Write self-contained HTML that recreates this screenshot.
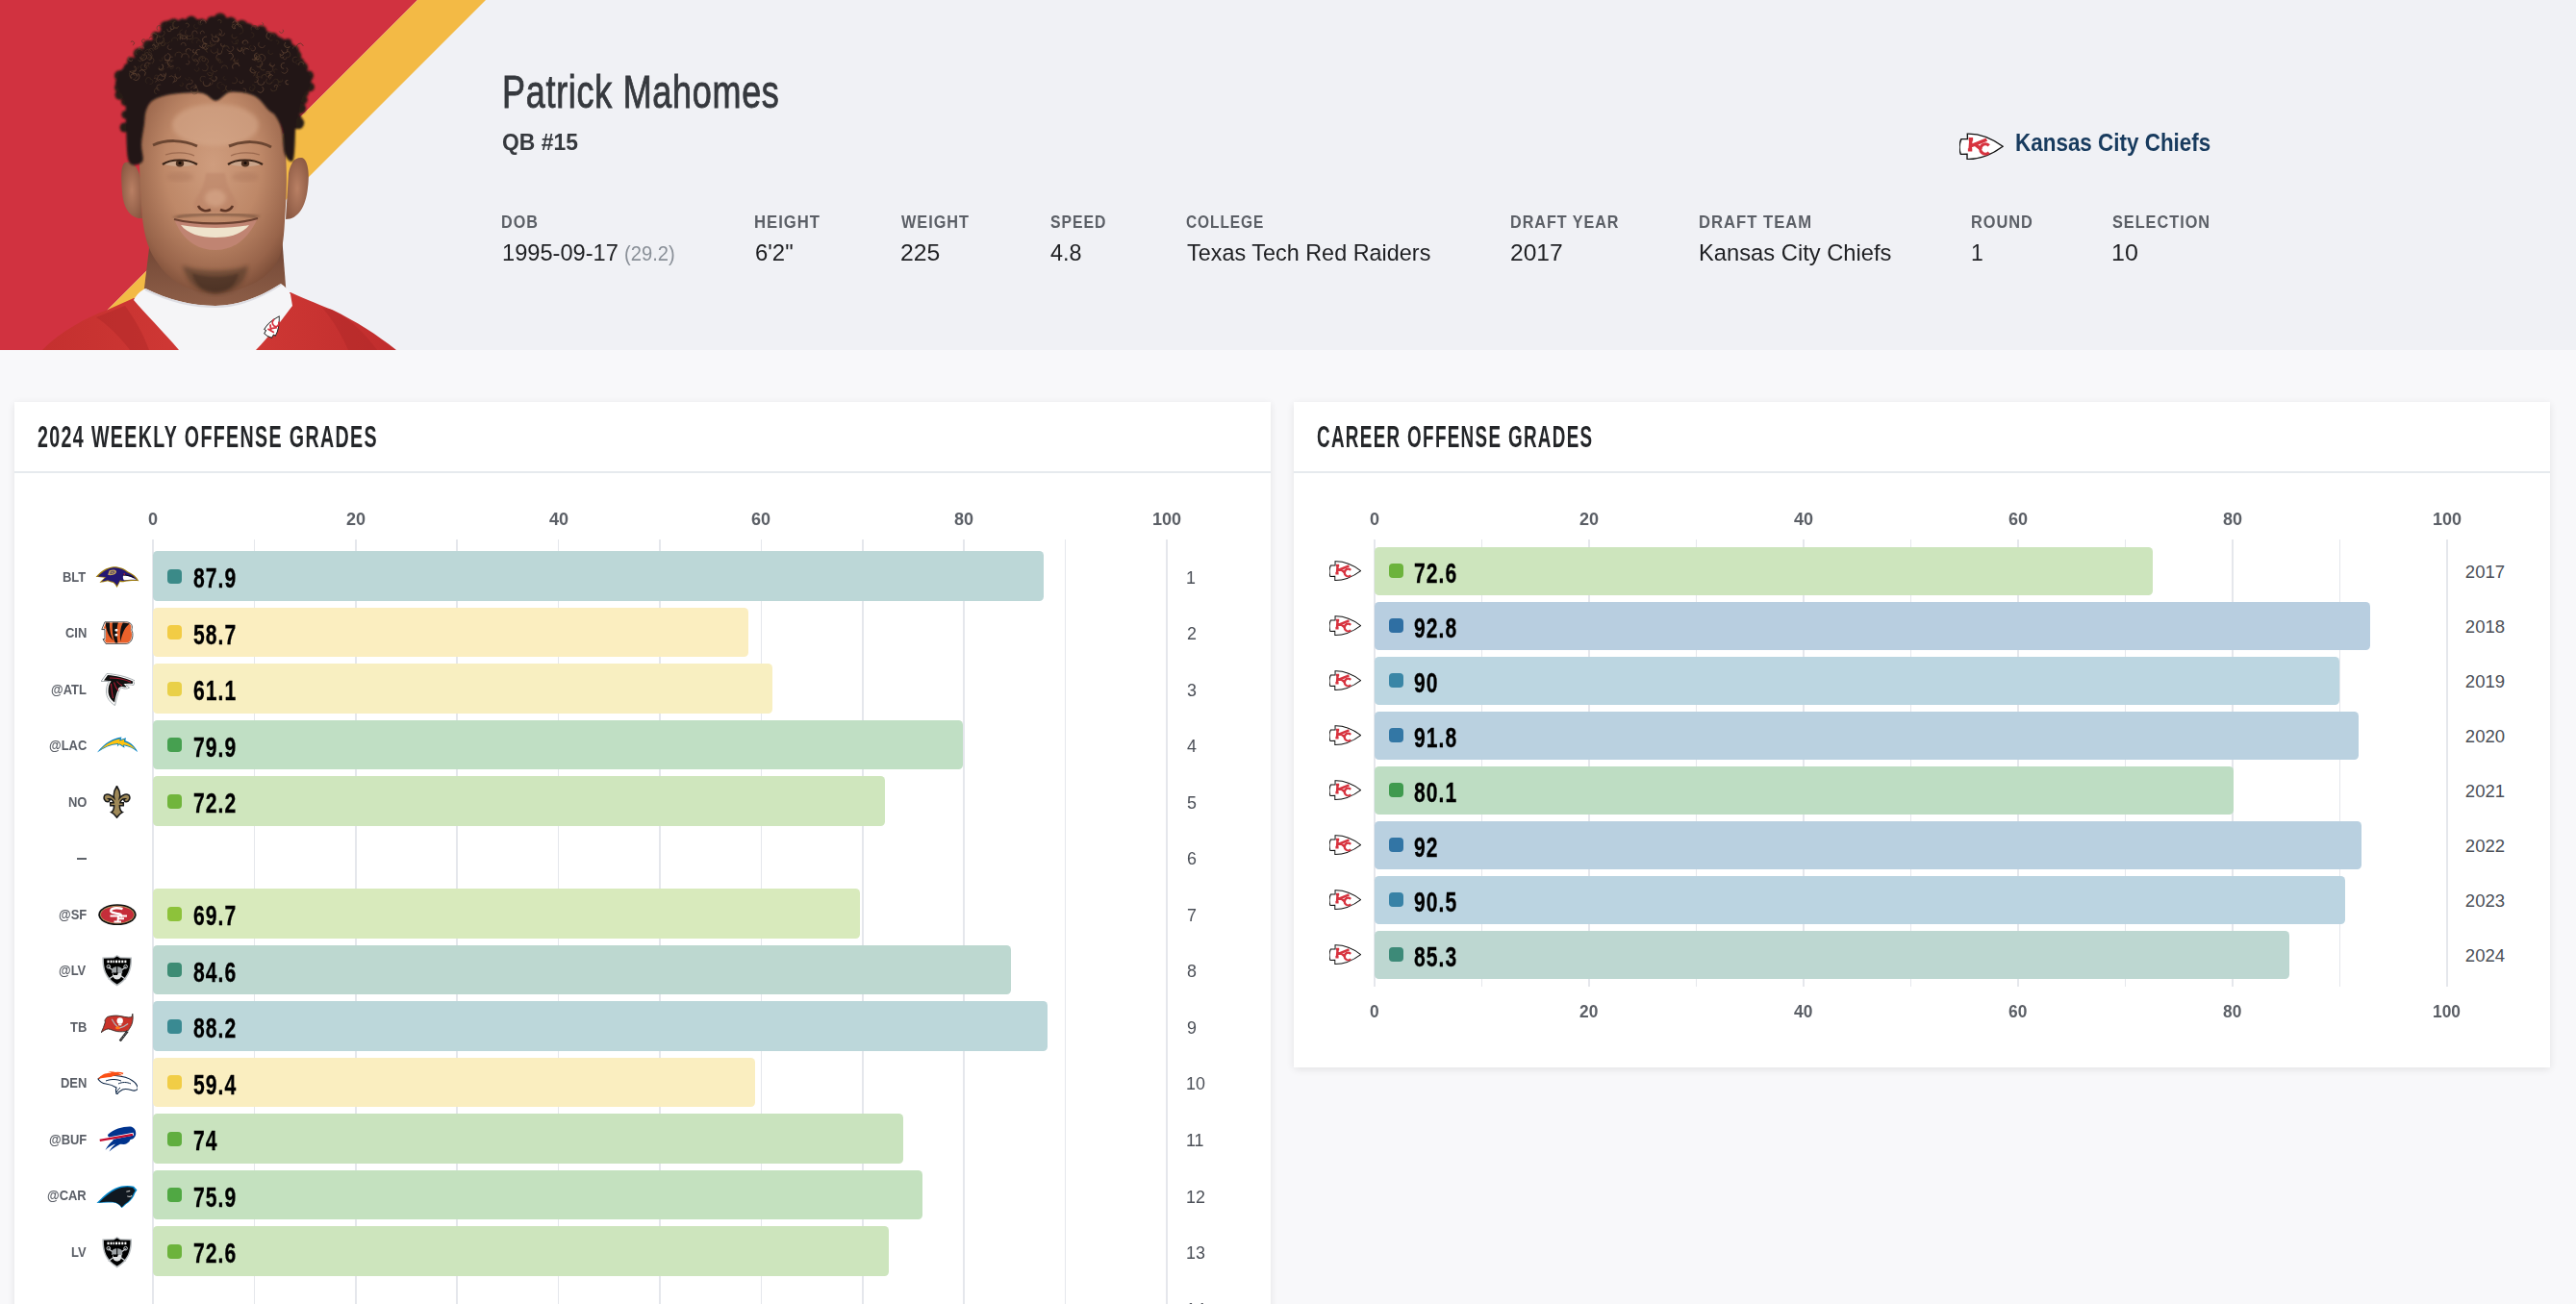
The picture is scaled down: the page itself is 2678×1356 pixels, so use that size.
<!DOCTYPE html>
<html><head><meta charset="utf-8"><style>
html,body{margin:0;padding:0;}
body{width:2678px;height:1356px;overflow:hidden;position:relative;background:#f8f8fa;font-family:"Liberation Sans", sans-serif;}
.t{position:absolute;white-space:nowrap;line-height:1;}
svg{position:absolute;}
</style></head><body>
<div style="position:absolute;left:0.00px;top:0.00px;width:2678.00px;height:364.00px;background:#f0f1f5;"></div><svg style="left:0;top:0" width="520" height="364" viewBox="0 0 520 364">
<defs>
<radialGradient id="skin" cx="0.5" cy="0.38" r="0.65">
<stop offset="0" stop-color="#cf9d7e"/><stop offset="0.5" stop-color="#be8868"/><stop offset="0.85" stop-color="#98644a"/><stop offset="1" stop-color="#7a4c37"/>
</radialGradient>
<radialGradient id="ear" cx="0.5" cy="0.5" r="0.6"><stop offset="0" stop-color="#b98064"/><stop offset="1" stop-color="#8a5842"/></radialGradient>
<linearGradient id="neck" x1="0" y1="0" x2="0" y2="1"><stop offset="0" stop-color="#6e4332"/><stop offset="1" stop-color="#8f6049"/></linearGradient>
<linearGradient id="jer" x1="0" y1="0" x2="1" y2="0"><stop offset="0" stop-color="#c4302f"/><stop offset="0.5" stop-color="#d23a36"/><stop offset="1" stop-color="#c02d2d"/></linearGradient>
<filter id="soft" x="-10%" y="-10%" width="120%" height="120%"><feGaussianBlur stdDeviation="0.8"/></filter>
<filter id="blur2"><feGaussianBlur stdDeviation="2"/></filter>
</defs>
<polygon points="0,0 434,0 70,364 0,364" fill="#d13240"/>
<polygon points="434,0 505,0 141,364 70,364" fill="#f3ba45"/>
<!-- jersey -->
<path d="M44,364 C62,345 90,330 112,322 L139,310 L302,304 C320,312 335,318 345,322 C370,334 392,348 412,364 Z" fill="url(#jer)"/>
<path d="M100,330 C110,336 125,350 135,364 L155,364 C148,345 140,332 130,318 Z" fill="#b02828" opacity="0.5"/>
<path d="M335,320 C348,335 356,350 362,364 L392,364 C378,345 362,330 345,322 Z" fill="#b02828" opacity="0.5"/>
<!-- neck -->
<path d="M156,250 L293,245 L298,310 C270,322 185,326 148,316 Z" fill="url(#neck)"/>
<!-- collar -->
<path d="M139,312 C142,306 147,302 151,300 C175,312 200,318 224,318 C250,318 275,306 292,295 C297,298 300,302 302,306 L304,318 C295,330 280,350 266,364 L186,364 C170,345 150,325 139,312 Z" fill="#f5f5f7"/>
<path d="M151,301 C175,313 200,319 224,319 C250,319 275,307 292,296" stroke="#dcdce2" stroke-width="2" fill="none"/>
<!-- collar KC patch -->
<g transform="translate(285,338) rotate(-60) scale(0.75)">
<path d="M-12,-9 C-4,-9 6,-5 14,0 C6,5 -4,9 -12,9 L-12,6 L-17,6 C-18,3 -18,-3 -17,-6 L-12,-6 Z" fill="#fff" stroke="#222" stroke-width="1.2"/>
<path d="M-9,-5 L-9,5 M-9,0 L-2,-5 M-6,-1 L-1,5" stroke="#d7333f" stroke-width="2.4" fill="none"/>
<path d="M7,-4 C0,-6 -3,1 0,4 C2,6 6,5 7,3" stroke="#d7333f" stroke-width="2.2" fill="none"/>
</g>
<!-- ears -->
<path d="M148,227 C135,228 128,215 127,200 C126,185 125,172 130,169 C138,166 144,175 146,185 Z" fill="url(#ear)"/>
<path d="M297,228 C310,228 318,215 320,195 C322,180 320,166 314,164 C306,163 302,170 300,180 Z" fill="url(#ear)"/>
<!-- face -->
<path d="M145,140 C146,110 160,92 185,90 C205,88 245,88 264,92 C285,100 294,125 297,160 C299,190 297,215 296,230 C295,250 293,262 290,268 C282,288 258,302 224,306 C198,304 178,294 165,275 C155,262 151,250 148,227 C146,200 144,165 145,140 Z" fill="url(#skin)"/>
<!-- cheek highlights -->
<ellipse cx="224" cy="130" rx="45" ry="22" fill="#d9ad90" opacity="0.5" filter="url(#blur2)"/>
<g filter="url(#soft)"><circle cx="129.6" cy="132.6" r="5.0" fill="#261a14"/><circle cx="130.6" cy="119.2" r="4.2" fill="#261a14"/><circle cx="130.0" cy="105.8" r="4.2" fill="#261a14"/><circle cx="124.8" cy="98.5" r="5.3" fill="#261a14"/><circle cx="124.3" cy="91.1" r="5.3" fill="#261a14"/><circle cx="124.5" cy="86.1" r="4.7" fill="#261a14"/><circle cx="124.6" cy="78.7" r="5.7" fill="#261a14"/><circle cx="132.9" cy="70.2" r="4.1" fill="#261a14"/><circle cx="136.4" cy="63.7" r="4.4" fill="#261a14"/><circle cx="145.1" cy="56.1" r="6.4" fill="#261a14"/><circle cx="154.4" cy="47.5" r="5.9" fill="#261a14"/><circle cx="162.1" cy="37.0" r="4.2" fill="#261a14"/><circle cx="172.5" cy="27.8" r="6.0" fill="#261a14"/><circle cx="176.1" cy="26.8" r="5.8" fill="#261a14"/><circle cx="180.6" cy="25.6" r="6.4" fill="#261a14"/><circle cx="189.9" cy="25.0" r="5.7" fill="#261a14"/><circle cx="198.9" cy="22.8" r="6.2" fill="#261a14"/><circle cx="204.4" cy="24.2" r="4.4" fill="#261a14"/><circle cx="209.7" cy="24.0" r="4.5" fill="#261a14"/><circle cx="220.7" cy="22.7" r="6.0" fill="#261a14"/><circle cx="228.9" cy="20.1" r="6.6" fill="#261a14"/><circle cx="239.9" cy="23.3" r="5.8" fill="#261a14"/><circle cx="251.4" cy="27.3" r="6.5" fill="#261a14"/><circle cx="257.8" cy="30.0" r="6.0" fill="#261a14"/><circle cx="271.5" cy="32.4" r="5.9" fill="#261a14"/><circle cx="284.0" cy="38.9" r="4.9" fill="#261a14"/><circle cx="299.2" cy="44.4" r="4.1" fill="#261a14"/><circle cx="301.6" cy="49.7" r="4.4" fill="#261a14"/><circle cx="306.4" cy="52.1" r="4.4" fill="#261a14"/><circle cx="306.7" cy="58.2" r="6.6" fill="#261a14"/><circle cx="310.9" cy="65.3" r="5.6" fill="#261a14"/><circle cx="313.5" cy="70.5" r="6.6" fill="#261a14"/><circle cx="320.9" cy="78.7" r="5.1" fill="#261a14"/><circle cx="319.6" cy="82.9" r="4.5" fill="#261a14"/><circle cx="322.3" cy="90.5" r="4.7" fill="#261a14"/><circle cx="316.4" cy="96.0" r="4.8" fill="#261a14"/><circle cx="314.7" cy="103.6" r="5.1" fill="#261a14"/><circle cx="312.0" cy="112.5" r="6.1" fill="#261a14"/><circle cx="307.6" cy="123.3" r="6.0" fill="#261a14"/><circle cx="309.9" cy="128.0" r="6.3" fill="#261a14"/><path d="M134.0,168.0 C131.2,161.6 131.7,140.2 131.0,129.6 C130.3,119.0 131.3,111.3 130.0,104.7 C128.7,98.1 123.8,94.7 123.0,89.7 C122.2,84.7 122.5,79.5 125.0,74.8 C127.5,70.1 132.9,66.8 137.9,61.8 C142.9,56.8 149.1,50.9 154.9,44.9 C160.7,38.9 168.7,29.4 172.8,25.9 C177.0,22.4 175.3,25.1 179.8,23.9 C184.3,22.7 194.7,19.1 199.7,18.9 C204.7,18.7 204.7,23.2 209.7,22.9 C214.7,22.6 222.9,16.7 229.6,17.0 C236.2,17.3 242.9,22.9 249.6,24.9 C256.2,26.9 261.2,25.9 269.5,28.9 C277.8,31.9 293.1,39.4 299.4,42.9 C305.7,46.4 305.7,46.8 307.4,49.9 C309.1,53.0 307.4,57.6 309.4,61.8 C311.4,66.0 317.2,70.5 319.4,74.8 C321.6,79.1 323.2,83.5 322.4,87.7 C321.6,91.9 316.6,94.4 314.4,99.7 C312.2,105.0 310.6,114.6 309.4,119.6 C308.2,124.6 308.1,121.9 307.4,129.6 C306.7,137.3 306.9,160.9 305.0,166.0 C303.1,171.1 298.0,165.2 296.0,160.0 C294.0,154.8 294.7,141.7 293.0,135.0 C291.3,128.3 288.2,123.4 286.0,120.0 C283.8,116.6 283.1,118.1 279.5,114.7 C275.9,111.3 271.1,102.9 264.5,99.7 C257.9,96.5 246.2,94.9 239.6,95.7 C233.0,96.5 229.7,104.5 224.7,104.7 C219.7,104.9 217.2,97.9 209.7,96.7 C202.2,95.5 188.1,96.5 179.8,97.7 C171.5,98.9 164.6,100.9 159.9,103.7 C155.2,106.5 153.6,110.4 151.9,114.7 C150.2,119.0 150.7,123.7 149.9,129.6 C149.1,135.5 147.3,143.6 147.0,150.0 C146.7,156.4 150.2,165.0 148.0,168.0 C145.8,171.0 136.8,174.4 134.0,168.0 Z" fill="#241913"/></g><g opacity="0.9"><circle cx="202.6" cy="53.1" r="2.0" fill="none" stroke="#6a4c38" stroke-width="0.9" stroke-dasharray="6.9 5.7" transform="rotate(22 202.6 53.1)" opacity="0.75"/><circle cx="160.0" cy="48.5" r="1.9" fill="none" stroke="#5a4030" stroke-width="0.9" stroke-dasharray="6.6 5.4" transform="rotate(204 160.0 48.5)" opacity="0.75"/><circle cx="243.5" cy="27.5" r="2.2" fill="none" stroke="#6a4c38" stroke-width="0.9" stroke-dasharray="7.7 6.3" transform="rotate(53 243.5 27.5)" opacity="0.75"/><circle cx="176.7" cy="49.1" r="2.5" fill="none" stroke="#5a4030" stroke-width="0.9" stroke-dasharray="8.7 7.1" transform="rotate(42 176.7 49.1)" opacity="0.75"/><circle cx="218.9" cy="46.3" r="2.1" fill="none" stroke="#3a2a1f" stroke-width="0.9" stroke-dasharray="7.2 5.9" transform="rotate(267 218.9 46.3)" opacity="0.75"/><circle cx="218.5" cy="76.0" r="2.8" fill="none" stroke="#4a3526" stroke-width="0.9" stroke-dasharray="9.8 8.0" transform="rotate(342 218.5 76.0)" opacity="0.75"/><circle cx="227.7" cy="33.4" r="2.9" fill="none" stroke="#5a4030" stroke-width="0.9" stroke-dasharray="10.0 8.2" transform="rotate(273 227.7 33.4)" opacity="0.75"/><circle cx="185.1" cy="72.1" r="2.0" fill="none" stroke="#3a2a1f" stroke-width="0.9" stroke-dasharray="6.8 5.6" transform="rotate(187 185.1 72.1)" opacity="0.75"/><circle cx="298.0" cy="49.7" r="2.2" fill="none" stroke="#3a2a1f" stroke-width="0.9" stroke-dasharray="7.8 6.3" transform="rotate(229 298.0 49.7)" opacity="0.75"/><circle cx="243.4" cy="83.5" r="3.3" fill="none" stroke="#4a3526" stroke-width="0.9" stroke-dasharray="11.5 9.4" transform="rotate(290 243.4 83.5)" opacity="0.75"/><circle cx="281.4" cy="79.7" r="2.3" fill="none" stroke="#6a4c38" stroke-width="0.9" stroke-dasharray="7.8 6.4" transform="rotate(128 281.4 79.7)" opacity="0.75"/><circle cx="181.7" cy="42.2" r="3.2" fill="none" stroke="#3a2a1f" stroke-width="0.9" stroke-dasharray="11.0 9.0" transform="rotate(161 181.7 42.2)" opacity="0.75"/><circle cx="306.7" cy="50.4" r="2.2" fill="none" stroke="#4a3526" stroke-width="0.9" stroke-dasharray="7.7 6.3" transform="rotate(169 306.7 50.4)" opacity="0.75"/><circle cx="192.5" cy="59.6" r="3.8" fill="none" stroke="#5a4030" stroke-width="0.9" stroke-dasharray="13.0 10.7" transform="rotate(173 192.5 59.6)" opacity="0.75"/><circle cx="250.8" cy="84.4" r="2.0" fill="none" stroke="#5a4030" stroke-width="0.9" stroke-dasharray="6.8 5.6" transform="rotate(328 250.8 84.4)" opacity="0.75"/><circle cx="274.7" cy="80.5" r="2.8" fill="none" stroke="#4a3526" stroke-width="0.9" stroke-dasharray="9.5 7.8" transform="rotate(156 274.7 80.5)" opacity="0.75"/><circle cx="247.6" cy="28.8" r="3.7" fill="none" stroke="#6a4c38" stroke-width="0.9" stroke-dasharray="12.8 10.4" transform="rotate(167 247.6 28.8)" opacity="0.75"/><circle cx="267.5" cy="28.6" r="2.1" fill="none" stroke="#4a3526" stroke-width="0.9" stroke-dasharray="7.3 6.0" transform="rotate(10 267.5 28.6)" opacity="0.75"/><circle cx="239.3" cy="58.3" r="3.1" fill="none" stroke="#6a4c38" stroke-width="0.9" stroke-dasharray="10.8 8.8" transform="rotate(237 239.3 58.3)" opacity="0.75"/><circle cx="194.8" cy="64.8" r="2.1" fill="none" stroke="#5a4030" stroke-width="0.9" stroke-dasharray="7.1 5.8" transform="rotate(288 194.8 64.8)" opacity="0.75"/><circle cx="264.4" cy="30.0" r="3.3" fill="none" stroke="#4a3526" stroke-width="0.9" stroke-dasharray="11.4 9.3" transform="rotate(156 264.4 30.0)" opacity="0.75"/><circle cx="291.3" cy="86.4" r="2.2" fill="none" stroke="#3a2a1f" stroke-width="0.9" stroke-dasharray="7.7 6.3" transform="rotate(77 291.3 86.4)" opacity="0.75"/><circle cx="222.7" cy="81.6" r="2.5" fill="none" stroke="#6a4c38" stroke-width="0.9" stroke-dasharray="8.5 6.9" transform="rotate(300 222.7 81.6)" opacity="0.75"/><circle cx="141.3" cy="79.7" r="3.6" fill="none" stroke="#6a4c38" stroke-width="0.9" stroke-dasharray="12.4 10.2" transform="rotate(298 141.3 79.7)" opacity="0.75"/><circle cx="292.5" cy="32.2" r="2.1" fill="none" stroke="#5a4030" stroke-width="0.9" stroke-dasharray="7.3 5.9" transform="rotate(314 292.5 32.2)" opacity="0.75"/><circle cx="273.7" cy="69.5" r="3.4" fill="none" stroke="#4a3526" stroke-width="0.9" stroke-dasharray="11.6 9.5" transform="rotate(62 273.7 69.5)" opacity="0.75"/><circle cx="217.6" cy="78.6" r="2.9" fill="none" stroke="#3a2a1f" stroke-width="0.9" stroke-dasharray="10.1 8.2" transform="rotate(246 217.6 78.6)" opacity="0.75"/><circle cx="228.2" cy="59.6" r="3.4" fill="none" stroke="#5a4030" stroke-width="0.9" stroke-dasharray="11.6 9.5" transform="rotate(89 228.2 59.6)" opacity="0.75"/><circle cx="181.2" cy="82.2" r="2.8" fill="none" stroke="#5a4030" stroke-width="0.9" stroke-dasharray="9.7 8.0" transform="rotate(274 181.2 82.2)" opacity="0.75"/><circle cx="298.8" cy="56.6" r="3.0" fill="none" stroke="#4a3526" stroke-width="0.9" stroke-dasharray="10.5 8.6" transform="rotate(249 298.8 56.6)" opacity="0.75"/><circle cx="213.7" cy="63.6" r="2.8" fill="none" stroke="#4a3526" stroke-width="0.9" stroke-dasharray="9.5 7.8" transform="rotate(252 213.7 63.6)" opacity="0.75"/><circle cx="178.0" cy="65.6" r="3.7" fill="none" stroke="#6a4c38" stroke-width="0.9" stroke-dasharray="12.7 10.4" transform="rotate(49 178.0 65.6)" opacity="0.75"/><circle cx="152.5" cy="56.5" r="1.9" fill="none" stroke="#4a3526" stroke-width="0.9" stroke-dasharray="6.7 5.5" transform="rotate(154 152.5 56.5)" opacity="0.75"/><circle cx="169.3" cy="45.6" r="2.0" fill="none" stroke="#4a3526" stroke-width="0.9" stroke-dasharray="7.1 5.8" transform="rotate(338 169.3 45.6)" opacity="0.75"/><circle cx="249.0" cy="50.6" r="2.3" fill="none" stroke="#4a3526" stroke-width="0.9" stroke-dasharray="8.0 6.5" transform="rotate(348 249.0 50.6)" opacity="0.75"/><circle cx="203.7" cy="60.0" r="3.8" fill="none" stroke="#4a3526" stroke-width="0.9" stroke-dasharray="13.1 10.7" transform="rotate(58 203.7 60.0)" opacity="0.75"/><circle cx="209.8" cy="62.2" r="2.5" fill="none" stroke="#4a3526" stroke-width="0.9" stroke-dasharray="8.6 7.0" transform="rotate(128 209.8 62.2)" opacity="0.75"/><circle cx="147.1" cy="50.5" r="2.5" fill="none" stroke="#6a4c38" stroke-width="0.9" stroke-dasharray="8.6 7.0" transform="rotate(159 147.1 50.5)" opacity="0.75"/><circle cx="245.4" cy="62.0" r="1.9" fill="none" stroke="#4a3526" stroke-width="0.9" stroke-dasharray="6.7 5.5" transform="rotate(350 245.4 62.0)" opacity="0.75"/><circle cx="149.4" cy="42.7" r="1.9" fill="none" stroke="#4a3526" stroke-width="0.9" stroke-dasharray="6.5 5.3" transform="rotate(97 149.4 42.7)" opacity="0.75"/><circle cx="154.0" cy="54.9" r="3.6" fill="none" stroke="#3a2a1f" stroke-width="0.9" stroke-dasharray="12.5 10.2" transform="rotate(146 154.0 54.9)" opacity="0.75"/><circle cx="229.3" cy="62.2" r="2.8" fill="none" stroke="#3a2a1f" stroke-width="0.9" stroke-dasharray="9.6 7.9" transform="rotate(32 229.3 62.2)" opacity="0.75"/><circle cx="140.6" cy="75.7" r="2.7" fill="none" stroke="#5a4030" stroke-width="0.9" stroke-dasharray="9.2 7.5" transform="rotate(97 140.6 75.7)" opacity="0.75"/><circle cx="178.2" cy="69.4" r="2.2" fill="none" stroke="#3a2a1f" stroke-width="0.9" stroke-dasharray="7.8 6.3" transform="rotate(311 178.2 69.4)" opacity="0.75"/><circle cx="213.9" cy="48.5" r="2.9" fill="none" stroke="#3a2a1f" stroke-width="0.9" stroke-dasharray="10.0 8.2" transform="rotate(224 213.9 48.5)" opacity="0.75"/><circle cx="138.0" cy="77.3" r="3.7" fill="none" stroke="#4a3526" stroke-width="0.9" stroke-dasharray="12.7 10.4" transform="rotate(94 138.0 77.3)" opacity="0.75"/><circle cx="163.5" cy="94.7" r="3.1" fill="none" stroke="#4a3526" stroke-width="0.9" stroke-dasharray="10.6 8.6" transform="rotate(104 163.5 94.7)" opacity="0.75"/><circle cx="222.5" cy="35.9" r="2.5" fill="none" stroke="#5a4030" stroke-width="0.9" stroke-dasharray="8.6 7.1" transform="rotate(358 222.5 35.9)" opacity="0.75"/><circle cx="225.1" cy="41.2" r="2.7" fill="none" stroke="#6a4c38" stroke-width="0.9" stroke-dasharray="9.3 7.6" transform="rotate(236 225.1 41.2)" opacity="0.75"/><circle cx="231.0" cy="91.3" r="3.7" fill="none" stroke="#3a2a1f" stroke-width="0.9" stroke-dasharray="12.9 10.6" transform="rotate(248 231.0 91.3)" opacity="0.75"/><circle cx="311.8" cy="48.7" r="3.5" fill="none" stroke="#4a3526" stroke-width="0.9" stroke-dasharray="12.0 9.8" transform="rotate(146 311.8 48.7)" opacity="0.75"/><circle cx="194.3" cy="26.2" r="2.1" fill="none" stroke="#5a4030" stroke-width="0.9" stroke-dasharray="7.1 5.8" transform="rotate(225 194.3 26.2)" opacity="0.75"/><circle cx="292.8" cy="55.6" r="1.9" fill="none" stroke="#6a4c38" stroke-width="0.9" stroke-dasharray="6.6 5.4" transform="rotate(313 292.8 55.6)" opacity="0.75"/><circle cx="254.1" cy="44.0" r="2.3" fill="none" stroke="#3a2a1f" stroke-width="0.9" stroke-dasharray="7.9 6.5" transform="rotate(16 254.1 44.0)" opacity="0.75"/><circle cx="164.3" cy="43.0" r="1.8" fill="none" stroke="#3a2a1f" stroke-width="0.9" stroke-dasharray="6.2 5.1" transform="rotate(346 164.3 43.0)" opacity="0.75"/><circle cx="309.9" cy="64.7" r="2.3" fill="none" stroke="#3a2a1f" stroke-width="0.9" stroke-dasharray="7.9 6.5" transform="rotate(78 309.9 64.7)" opacity="0.75"/><circle cx="163.8" cy="48.2" r="2.0" fill="none" stroke="#3a2a1f" stroke-width="0.9" stroke-dasharray="6.8 5.6" transform="rotate(181 163.8 48.2)" opacity="0.75"/><circle cx="167.2" cy="61.4" r="1.8" fill="none" stroke="#3a2a1f" stroke-width="0.9" stroke-dasharray="6.3 5.1" transform="rotate(294 167.2 61.4)" opacity="0.75"/><circle cx="156.6" cy="67.8" r="2.6" fill="none" stroke="#3a2a1f" stroke-width="0.9" stroke-dasharray="8.9 7.3" transform="rotate(110 156.6 67.8)" opacity="0.75"/><circle cx="173.1" cy="67.7" r="2.9" fill="none" stroke="#4a3526" stroke-width="0.9" stroke-dasharray="9.9 8.1" transform="rotate(237 173.1 67.7)" opacity="0.75"/><circle cx="262.5" cy="90.6" r="2.6" fill="none" stroke="#3a2a1f" stroke-width="0.9" stroke-dasharray="8.9 7.3" transform="rotate(259 262.5 90.6)" opacity="0.75"/><circle cx="221.4" cy="44.2" r="3.0" fill="none" stroke="#4a3526" stroke-width="0.9" stroke-dasharray="10.5 8.6" transform="rotate(16 221.4 44.2)" opacity="0.75"/><circle cx="284.5" cy="91.6" r="3.1" fill="none" stroke="#4a3526" stroke-width="0.9" stroke-dasharray="10.6 8.6" transform="rotate(328 284.5 91.6)" opacity="0.75"/><circle cx="269.3" cy="66.3" r="3.4" fill="none" stroke="#5a4030" stroke-width="0.9" stroke-dasharray="11.8 9.7" transform="rotate(298 269.3 66.3)" opacity="0.75"/><circle cx="238.1" cy="91.6" r="3.2" fill="none" stroke="#4a3526" stroke-width="0.9" stroke-dasharray="10.9 9.0" transform="rotate(31 238.1 91.6)" opacity="0.75"/><circle cx="137.7" cy="71.7" r="3.7" fill="none" stroke="#6a4c38" stroke-width="0.9" stroke-dasharray="12.9 10.5" transform="rotate(301 137.7 71.7)" opacity="0.75"/><circle cx="233.3" cy="71.0" r="3.1" fill="none" stroke="#4a3526" stroke-width="0.9" stroke-dasharray="10.5 8.6" transform="rotate(176 233.3 71.0)" opacity="0.75"/><circle cx="268.4" cy="61.2" r="2.9" fill="none" stroke="#5a4030" stroke-width="0.9" stroke-dasharray="9.9 8.1" transform="rotate(268 268.4 61.2)" opacity="0.75"/><circle cx="217.7" cy="85.1" r="3.5" fill="none" stroke="#4a3526" stroke-width="0.9" stroke-dasharray="12.1 9.9" transform="rotate(263 217.7 85.1)" opacity="0.75"/><circle cx="168.0" cy="79.7" r="3.8" fill="none" stroke="#6a4c38" stroke-width="0.9" stroke-dasharray="13.0 10.6" transform="rotate(304 168.0 79.7)" opacity="0.75"/><circle cx="183.2" cy="25.6" r="3.1" fill="none" stroke="#4a3526" stroke-width="0.9" stroke-dasharray="10.6 8.7" transform="rotate(28 183.2 25.6)" opacity="0.75"/><circle cx="157.3" cy="41.8" r="3.3" fill="none" stroke="#3a2a1f" stroke-width="0.9" stroke-dasharray="11.4 9.3" transform="rotate(224 157.3 41.8)" opacity="0.75"/><circle cx="154.7" cy="59.6" r="2.8" fill="none" stroke="#5a4030" stroke-width="0.9" stroke-dasharray="9.6 7.8" transform="rotate(249 154.7 59.6)" opacity="0.75"/><circle cx="255.0" cy="44.7" r="2.8" fill="none" stroke="#6a4c38" stroke-width="0.9" stroke-dasharray="9.8 8.0" transform="rotate(168 255.0 44.7)" opacity="0.75"/><circle cx="231.6" cy="46.3" r="2.0" fill="none" stroke="#6a4c38" stroke-width="0.9" stroke-dasharray="6.8 5.6" transform="rotate(6 231.6 46.3)" opacity="0.75"/><circle cx="214.9" cy="86.0" r="3.7" fill="none" stroke="#6a4c38" stroke-width="0.9" stroke-dasharray="12.9 10.6" transform="rotate(358 214.9 86.0)" opacity="0.75"/><circle cx="201.6" cy="93.5" r="3.7" fill="none" stroke="#5a4030" stroke-width="0.9" stroke-dasharray="12.7 10.4" transform="rotate(209 201.6 93.5)" opacity="0.75"/><circle cx="156.2" cy="62.9" r="3.7" fill="none" stroke="#4a3526" stroke-width="0.9" stroke-dasharray="12.8 10.5" transform="rotate(217 156.2 62.9)" opacity="0.75"/><circle cx="246.9" cy="43.8" r="2.0" fill="none" stroke="#3a2a1f" stroke-width="0.9" stroke-dasharray="7.0 5.7" transform="rotate(83 246.9 43.8)" opacity="0.75"/><circle cx="296.1" cy="59.9" r="1.8" fill="none" stroke="#5a4030" stroke-width="0.9" stroke-dasharray="6.4 5.2" transform="rotate(342 296.1 59.9)" opacity="0.75"/><circle cx="256.1" cy="53.6" r="3.3" fill="none" stroke="#6a4c38" stroke-width="0.9" stroke-dasharray="11.2 9.2" transform="rotate(124 256.1 53.6)" opacity="0.75"/><circle cx="188.5" cy="87.5" r="1.8" fill="none" stroke="#3a2a1f" stroke-width="0.9" stroke-dasharray="6.2 5.1" transform="rotate(302 188.5 87.5)" opacity="0.75"/><circle cx="261.9" cy="92.3" r="2.4" fill="none" stroke="#3a2a1f" stroke-width="0.9" stroke-dasharray="8.2 6.7" transform="rotate(23 261.9 92.3)" opacity="0.75"/><circle cx="202.2" cy="89.9" r="2.0" fill="none" stroke="#6a4c38" stroke-width="0.9" stroke-dasharray="6.7 5.5" transform="rotate(272 202.2 89.9)" opacity="0.75"/><circle cx="288.0" cy="43.9" r="1.9" fill="none" stroke="#3a2a1f" stroke-width="0.9" stroke-dasharray="6.6 5.4" transform="rotate(229 288.0 43.9)" opacity="0.75"/><circle cx="210.7" cy="46.6" r="3.3" fill="none" stroke="#6a4c38" stroke-width="0.9" stroke-dasharray="11.6 9.5" transform="rotate(318 210.7 46.6)" opacity="0.75"/><circle cx="280.2" cy="71.2" r="3.6" fill="none" stroke="#4a3526" stroke-width="0.9" stroke-dasharray="12.5 10.3" transform="rotate(259 280.2 71.2)" opacity="0.75"/><circle cx="139.2" cy="79.1" r="2.7" fill="none" stroke="#4a3526" stroke-width="0.9" stroke-dasharray="9.3 7.6" transform="rotate(232 139.2 79.1)" opacity="0.75"/><circle cx="182.9" cy="25.8" r="3.7" fill="none" stroke="#4a3526" stroke-width="0.9" stroke-dasharray="12.6 10.3" transform="rotate(61 182.9 25.8)" opacity="0.75"/><circle cx="206.8" cy="44.0" r="2.3" fill="none" stroke="#3a2a1f" stroke-width="0.9" stroke-dasharray="8.0 6.5" transform="rotate(146 206.8 44.0)" opacity="0.75"/><circle cx="174.2" cy="59.7" r="3.1" fill="none" stroke="#5a4030" stroke-width="0.9" stroke-dasharray="10.8 8.9" transform="rotate(60 174.2 59.7)" opacity="0.75"/><circle cx="159.9" cy="38.2" r="3.6" fill="none" stroke="#6a4c38" stroke-width="0.9" stroke-dasharray="12.5 10.2" transform="rotate(198 159.9 38.2)" opacity="0.75"/><circle cx="213.8" cy="48.0" r="3.3" fill="none" stroke="#6a4c38" stroke-width="0.9" stroke-dasharray="11.5 9.4" transform="rotate(50 213.8 48.0)" opacity="0.75"/><circle cx="165.6" cy="29.1" r="2.5" fill="none" stroke="#5a4030" stroke-width="0.9" stroke-dasharray="8.6 7.0" transform="rotate(115 165.6 29.1)" opacity="0.75"/><circle cx="198.1" cy="85.1" r="2.2" fill="none" stroke="#5a4030" stroke-width="0.9" stroke-dasharray="7.6 6.2" transform="rotate(270 198.1 85.1)" opacity="0.75"/><circle cx="206.4" cy="54.3" r="2.8" fill="none" stroke="#6a4c38" stroke-width="0.9" stroke-dasharray="9.8 8.1" transform="rotate(97 206.4 54.3)" opacity="0.75"/><circle cx="269.1" cy="60.9" r="2.9" fill="none" stroke="#3a2a1f" stroke-width="0.9" stroke-dasharray="10.2 8.3" transform="rotate(45 269.1 60.9)" opacity="0.75"/><circle cx="223.1" cy="71.1" r="3.5" fill="none" stroke="#4a3526" stroke-width="0.9" stroke-dasharray="12.2 10.0" transform="rotate(33 223.1 71.1)" opacity="0.75"/><circle cx="295.9" cy="52.0" r="3.1" fill="none" stroke="#6a4c38" stroke-width="0.9" stroke-dasharray="10.7 8.7" transform="rotate(343 295.9 52.0)" opacity="0.75"/><circle cx="287.0" cy="90.1" r="1.8" fill="none" stroke="#5a4030" stroke-width="0.9" stroke-dasharray="6.4 5.2" transform="rotate(153 287.0 90.1)" opacity="0.75"/><circle cx="271.3" cy="84.7" r="3.7" fill="none" stroke="#6a4c38" stroke-width="0.9" stroke-dasharray="12.9 10.6" transform="rotate(0 271.3 84.7)" opacity="0.75"/><circle cx="202.4" cy="94.3" r="3.5" fill="none" stroke="#6a4c38" stroke-width="0.9" stroke-dasharray="11.9 9.8" transform="rotate(350 202.4 94.3)" opacity="0.75"/><circle cx="176.0" cy="30.5" r="2.1" fill="none" stroke="#5a4030" stroke-width="0.9" stroke-dasharray="7.3 6.0" transform="rotate(339 176.0 30.5)" opacity="0.75"/><circle cx="263.5" cy="72.5" r="3.3" fill="none" stroke="#6a4c38" stroke-width="0.9" stroke-dasharray="11.5 9.4" transform="rotate(31 263.5 72.5)" opacity="0.75"/><circle cx="153.2" cy="66.4" r="1.9" fill="none" stroke="#3a2a1f" stroke-width="0.9" stroke-dasharray="6.5 5.3" transform="rotate(346 153.2 66.4)" opacity="0.75"/><circle cx="245.9" cy="63.2" r="2.7" fill="none" stroke="#5a4030" stroke-width="0.9" stroke-dasharray="9.2 7.6" transform="rotate(36 245.9 63.2)" opacity="0.75"/><circle cx="165.5" cy="42.3" r="3.4" fill="none" stroke="#5a4030" stroke-width="0.9" stroke-dasharray="11.7 9.6" transform="rotate(4 165.5 42.3)" opacity="0.75"/><circle cx="185.8" cy="57.9" r="3.7" fill="none" stroke="#4a3526" stroke-width="0.9" stroke-dasharray="12.8 10.5" transform="rotate(171 185.8 57.9)" opacity="0.75"/><circle cx="173.4" cy="41.3" r="3.7" fill="none" stroke="#3a2a1f" stroke-width="0.9" stroke-dasharray="12.9 10.5" transform="rotate(20 173.4 41.3)" opacity="0.75"/><circle cx="165.9" cy="91.0" r="3.1" fill="none" stroke="#5a4030" stroke-width="0.9" stroke-dasharray="10.7 8.7" transform="rotate(93 165.9 91.0)" opacity="0.75"/><circle cx="253.5" cy="94.2" r="2.3" fill="none" stroke="#5a4030" stroke-width="0.9" stroke-dasharray="7.8 6.4" transform="rotate(250 253.5 94.2)" opacity="0.75"/><circle cx="262.9" cy="50.3" r="2.6" fill="none" stroke="#5a4030" stroke-width="0.9" stroke-dasharray="9.0 7.3" transform="rotate(287 262.9 50.3)" opacity="0.75"/><circle cx="266.7" cy="61.4" r="2.2" fill="none" stroke="#4a3526" stroke-width="0.9" stroke-dasharray="7.6 6.2" transform="rotate(112 266.7 61.4)" opacity="0.75"/><circle cx="281.7" cy="40.0" r="2.2" fill="none" stroke="#3a2a1f" stroke-width="0.9" stroke-dasharray="7.8 6.3" transform="rotate(39 281.7 40.0)" opacity="0.75"/><circle cx="245.4" cy="69.6" r="3.6" fill="none" stroke="#6a4c38" stroke-width="0.9" stroke-dasharray="12.4 10.2" transform="rotate(150 245.4 69.6)" opacity="0.75"/><circle cx="157.1" cy="52.7" r="2.2" fill="none" stroke="#4a3526" stroke-width="0.9" stroke-dasharray="7.7 6.3" transform="rotate(150 157.1 52.7)" opacity="0.75"/><circle cx="261.3" cy="36.4" r="2.7" fill="none" stroke="#3a2a1f" stroke-width="0.9" stroke-dasharray="9.3 7.6" transform="rotate(264 261.3 36.4)" opacity="0.75"/><circle cx="190.9" cy="36.5" r="3.7" fill="none" stroke="#6a4c38" stroke-width="0.9" stroke-dasharray="12.7 10.4" transform="rotate(11 190.9 36.5)" opacity="0.75"/><circle cx="252.9" cy="51.5" r="2.5" fill="none" stroke="#3a2a1f" stroke-width="0.9" stroke-dasharray="8.8 7.2" transform="rotate(159 252.9 51.5)" opacity="0.75"/><circle cx="144.9" cy="54.8" r="3.6" fill="none" stroke="#4a3526" stroke-width="0.9" stroke-dasharray="12.3 10.1" transform="rotate(137 144.9 54.8)" opacity="0.75"/><circle cx="272.2" cy="46.1" r="3.4" fill="none" stroke="#5a4030" stroke-width="0.9" stroke-dasharray="11.8 9.6" transform="rotate(18 272.2 46.1)" opacity="0.75"/><circle cx="217.6" cy="51.1" r="3.6" fill="none" stroke="#4a3526" stroke-width="0.9" stroke-dasharray="12.6 10.3" transform="rotate(116 217.6 51.1)" opacity="0.75"/><circle cx="266.4" cy="59.0" r="3.1" fill="none" stroke="#4a3526" stroke-width="0.9" stroke-dasharray="10.6 8.7" transform="rotate(292 266.4 59.0)" opacity="0.75"/><circle cx="271.8" cy="25.2" r="1.9" fill="none" stroke="#5a4030" stroke-width="0.9" stroke-dasharray="6.5 5.3" transform="rotate(289 271.8 25.2)" opacity="0.75"/><circle cx="141.6" cy="69.2" r="2.5" fill="none" stroke="#3a2a1f" stroke-width="0.9" stroke-dasharray="8.7 7.1" transform="rotate(345 141.6 69.2)" opacity="0.75"/><circle cx="244.1" cy="42.4" r="3.2" fill="none" stroke="#3a2a1f" stroke-width="0.9" stroke-dasharray="11.2 9.1" transform="rotate(333 244.1 42.4)" opacity="0.75"/><circle cx="185.0" cy="78.3" r="3.0" fill="none" stroke="#5a4030" stroke-width="0.9" stroke-dasharray="10.3 8.5" transform="rotate(9 185.0 78.3)" opacity="0.75"/><circle cx="173.3" cy="59.1" r="3.7" fill="none" stroke="#6a4c38" stroke-width="0.9" stroke-dasharray="12.8 10.5" transform="rotate(284 173.3 59.1)" opacity="0.75"/><circle cx="299.0" cy="85.6" r="2.1" fill="none" stroke="#6a4c38" stroke-width="0.9" stroke-dasharray="7.1 5.8" transform="rotate(66 299.0 85.6)" opacity="0.75"/><circle cx="278.5" cy="79.6" r="3.4" fill="none" stroke="#4a3526" stroke-width="0.9" stroke-dasharray="11.9 9.7" transform="rotate(219 278.5 79.6)" opacity="0.75"/><circle cx="190.6" cy="46.9" r="2.5" fill="none" stroke="#5a4030" stroke-width="0.9" stroke-dasharray="8.7 7.1" transform="rotate(184 190.6 46.9)" opacity="0.75"/><circle cx="202.5" cy="34.5" r="2.6" fill="none" stroke="#5a4030" stroke-width="0.9" stroke-dasharray="9.0 7.4" transform="rotate(173 202.5 34.5)" opacity="0.75"/><circle cx="230.8" cy="34.5" r="2.7" fill="none" stroke="#5a4030" stroke-width="0.9" stroke-dasharray="9.2 7.5" transform="rotate(356 230.8 34.5)" opacity="0.75"/><circle cx="179.0" cy="28.6" r="2.0" fill="none" stroke="#6a4c38" stroke-width="0.9" stroke-dasharray="6.9 5.6" transform="rotate(356 179.0 28.6)" opacity="0.75"/><circle cx="154.6" cy="58.0" r="3.6" fill="none" stroke="#4a3526" stroke-width="0.9" stroke-dasharray="12.4 10.1" transform="rotate(269 154.6 58.0)" opacity="0.75"/><circle cx="286.7" cy="73.8" r="2.0" fill="none" stroke="#3a2a1f" stroke-width="0.9" stroke-dasharray="7.1 5.8" transform="rotate(106 286.7 73.8)" opacity="0.75"/><circle cx="234.9" cy="51.1" r="3.3" fill="none" stroke="#4a3526" stroke-width="0.9" stroke-dasharray="11.3 9.3" transform="rotate(158 234.9 51.1)" opacity="0.75"/><circle cx="164.4" cy="40.4" r="2.4" fill="none" stroke="#4a3526" stroke-width="0.9" stroke-dasharray="8.2 6.7" transform="rotate(117 164.4 40.4)" opacity="0.75"/><circle cx="223.9" cy="40.0" r="3.4" fill="none" stroke="#6a4c38" stroke-width="0.9" stroke-dasharray="11.8 9.7" transform="rotate(357 223.9 40.0)" opacity="0.75"/><circle cx="148.9" cy="59.0" r="3.4" fill="none" stroke="#6a4c38" stroke-width="0.9" stroke-dasharray="11.9 9.7" transform="rotate(329 148.9 59.0)" opacity="0.75"/><circle cx="137.5" cy="44.9" r="2.0" fill="none" stroke="#4a3526" stroke-width="0.9" stroke-dasharray="7.0 5.8" transform="rotate(216 137.5 44.9)" opacity="0.75"/><circle cx="283.2" cy="37.1" r="2.0" fill="none" stroke="#4a3526" stroke-width="0.9" stroke-dasharray="6.7 5.5" transform="rotate(162 283.2 37.1)" opacity="0.75"/><circle cx="178.1" cy="82.7" r="3.7" fill="none" stroke="#5a4030" stroke-width="0.9" stroke-dasharray="12.8 10.4" transform="rotate(229 178.1 82.7)" opacity="0.75"/><circle cx="261.3" cy="49.3" r="1.9" fill="none" stroke="#3a2a1f" stroke-width="0.9" stroke-dasharray="6.5 5.3" transform="rotate(51 261.3 49.3)" opacity="0.75"/><circle cx="167.7" cy="41.9" r="3.0" fill="none" stroke="#4a3526" stroke-width="0.9" stroke-dasharray="10.4 8.5" transform="rotate(293 167.7 41.9)" opacity="0.75"/><circle cx="281.5" cy="53.9" r="2.5" fill="none" stroke="#3a2a1f" stroke-width="0.9" stroke-dasharray="8.8 7.2" transform="rotate(28 281.5 53.9)" opacity="0.75"/><circle cx="135.8" cy="60.7" r="2.8" fill="none" stroke="#6a4c38" stroke-width="0.9" stroke-dasharray="9.6 7.8" transform="rotate(36 135.8 60.7)" opacity="0.75"/><circle cx="203.1" cy="64.9" r="3.1" fill="none" stroke="#5a4030" stroke-width="0.9" stroke-dasharray="10.6 8.7" transform="rotate(235 203.1 64.9)" opacity="0.75"/><circle cx="203.6" cy="43.2" r="3.8" fill="none" stroke="#3a2a1f" stroke-width="0.9" stroke-dasharray="13.1 10.7" transform="rotate(150 203.6 43.2)" opacity="0.75"/><circle cx="139.5" cy="80.1" r="3.6" fill="none" stroke="#6a4c38" stroke-width="0.9" stroke-dasharray="12.3 10.1" transform="rotate(150 139.5 80.1)" opacity="0.75"/><circle cx="197.3" cy="37.4" r="3.3" fill="none" stroke="#4a3526" stroke-width="0.9" stroke-dasharray="11.3 9.2" transform="rotate(339 197.3 37.4)" opacity="0.75"/><circle cx="210.3" cy="34.2" r="2.0" fill="none" stroke="#5a4030" stroke-width="0.9" stroke-dasharray="7.0 5.7" transform="rotate(146 210.3 34.2)" opacity="0.75"/><circle cx="293.3" cy="58.0" r="2.1" fill="none" stroke="#5a4030" stroke-width="0.9" stroke-dasharray="7.3 6.0" transform="rotate(19 293.3 58.0)" opacity="0.75"/><circle cx="156.4" cy="84.9" r="2.6" fill="none" stroke="#3a2a1f" stroke-width="0.9" stroke-dasharray="9.0 7.3" transform="rotate(265 156.4 84.9)" opacity="0.75"/><circle cx="161.8" cy="49.1" r="2.1" fill="none" stroke="#4a3526" stroke-width="0.9" stroke-dasharray="7.3 6.0" transform="rotate(333 161.8 49.1)" opacity="0.75"/><circle cx="150.1" cy="60.3" r="3.4" fill="none" stroke="#4a3526" stroke-width="0.9" stroke-dasharray="11.8 9.6" transform="rotate(109 150.1 60.3)" opacity="0.75"/><circle cx="298.9" cy="46.5" r="3.0" fill="none" stroke="#6a4c38" stroke-width="0.9" stroke-dasharray="10.4 8.5" transform="rotate(31 298.9 46.5)" opacity="0.75"/><circle cx="261.8" cy="75.7" r="3.6" fill="none" stroke="#4a3526" stroke-width="0.9" stroke-dasharray="12.4 10.1" transform="rotate(224 261.8 75.7)" opacity="0.75"/><circle cx="243.7" cy="37.3" r="2.7" fill="none" stroke="#4a3526" stroke-width="0.9" stroke-dasharray="9.5 7.8" transform="rotate(15 243.7 37.3)" opacity="0.75"/><circle cx="196.5" cy="33.7" r="3.7" fill="none" stroke="#4a3526" stroke-width="0.9" stroke-dasharray="12.9 10.6" transform="rotate(15 196.5 33.7)" opacity="0.75"/><circle cx="234.0" cy="81.1" r="1.9" fill="none" stroke="#3a2a1f" stroke-width="0.9" stroke-dasharray="6.5 5.3" transform="rotate(42 234.0 81.1)" opacity="0.75"/><circle cx="240.9" cy="64.9" r="3.1" fill="none" stroke="#3a2a1f" stroke-width="0.9" stroke-dasharray="10.6 8.6" transform="rotate(234 240.9 64.9)" opacity="0.75"/><circle cx="187.0" cy="41.4" r="2.6" fill="none" stroke="#3a2a1f" stroke-width="0.9" stroke-dasharray="8.9 7.3" transform="rotate(161 187.0 41.4)" opacity="0.75"/><circle cx="211.1" cy="23.8" r="3.0" fill="none" stroke="#6a4c38" stroke-width="0.9" stroke-dasharray="10.5 8.6" transform="rotate(167 211.1 23.8)" opacity="0.75"/><circle cx="212.7" cy="70.2" r="3.4" fill="none" stroke="#4a3526" stroke-width="0.9" stroke-dasharray="11.9 9.7" transform="rotate(292 212.7 70.2)" opacity="0.75"/><circle cx="204.1" cy="27.2" r="2.5" fill="none" stroke="#3a2a1f" stroke-width="0.9" stroke-dasharray="8.7 7.1" transform="rotate(33 204.1 27.2)" opacity="0.75"/><circle cx="211.8" cy="61.8" r="1.9" fill="none" stroke="#4a3526" stroke-width="0.9" stroke-dasharray="6.5 5.3" transform="rotate(30 211.8 61.8)" opacity="0.75"/><circle cx="265.7" cy="82.7" r="2.8" fill="none" stroke="#5a4030" stroke-width="0.9" stroke-dasharray="9.8 8.0" transform="rotate(271 265.7 82.7)" opacity="0.75"/><circle cx="295.6" cy="72.9" r="3.4" fill="none" stroke="#5a4030" stroke-width="0.9" stroke-dasharray="11.6 9.5" transform="rotate(309 295.6 72.9)" opacity="0.75"/><circle cx="280.8" cy="37.1" r="3.8" fill="none" stroke="#6a4c38" stroke-width="0.9" stroke-dasharray="13.0 10.6" transform="rotate(104 280.8 37.1)" opacity="0.75"/><circle cx="280.0" cy="84.0" r="3.2" fill="none" stroke="#4a3526" stroke-width="0.9" stroke-dasharray="11.0 9.0" transform="rotate(24 280.0 84.0)" opacity="0.75"/><circle cx="194.9" cy="81.0" r="2.1" fill="none" stroke="#3a2a1f" stroke-width="0.9" stroke-dasharray="7.3 6.0" transform="rotate(326 194.9 81.0)" opacity="0.75"/><circle cx="214.4" cy="41.8" r="3.7" fill="none" stroke="#6a4c38" stroke-width="0.9" stroke-dasharray="12.9 10.5" transform="rotate(75 214.4 41.8)" opacity="0.75"/><circle cx="178.6" cy="61.5" r="2.4" fill="none" stroke="#5a4030" stroke-width="0.9" stroke-dasharray="8.4 6.9" transform="rotate(72 178.6 61.5)" opacity="0.75"/><circle cx="204.6" cy="71.7" r="2.4" fill="none" stroke="#3a2a1f" stroke-width="0.9" stroke-dasharray="8.1 6.7" transform="rotate(322 204.6 71.7)" opacity="0.75"/><circle cx="161.2" cy="83.2" r="2.0" fill="none" stroke="#5a4030" stroke-width="0.9" stroke-dasharray="7.0 5.7" transform="rotate(229 161.2 83.2)" opacity="0.75"/><circle cx="196.6" cy="90.1" r="2.9" fill="none" stroke="#5a4030" stroke-width="0.9" stroke-dasharray="10.1 8.2" transform="rotate(91 196.6 90.1)" opacity="0.75"/><circle cx="229.1" cy="88.8" r="3.3" fill="none" stroke="#3a2a1f" stroke-width="0.9" stroke-dasharray="11.3 9.3" transform="rotate(95 229.1 88.8)" opacity="0.75"/><circle cx="313.2" cy="67.0" r="2.5" fill="none" stroke="#5a4030" stroke-width="0.9" stroke-dasharray="8.7 7.1" transform="rotate(159 313.2 67.0)" opacity="0.75"/><circle cx="162.7" cy="80.0" r="1.9" fill="none" stroke="#3a2a1f" stroke-width="0.9" stroke-dasharray="6.6 5.4" transform="rotate(112 162.7 80.0)" opacity="0.75"/><circle cx="265.6" cy="80.3" r="2.2" fill="none" stroke="#3a2a1f" stroke-width="0.9" stroke-dasharray="7.8 6.3" transform="rotate(222 265.6 80.3)" opacity="0.75"/><circle cx="210.0" cy="62.0" r="3.6" fill="none" stroke="#4a3526" stroke-width="0.9" stroke-dasharray="12.4 10.2" transform="rotate(176 210.0 62.0)" opacity="0.75"/><circle cx="243.3" cy="25.6" r="1.9" fill="none" stroke="#3a2a1f" stroke-width="0.9" stroke-dasharray="6.6 5.4" transform="rotate(109 243.3 25.6)" opacity="0.75"/><circle cx="226.8" cy="63.7" r="2.6" fill="none" stroke="#3a2a1f" stroke-width="0.9" stroke-dasharray="9.1 7.4" transform="rotate(212 226.8 63.7)" opacity="0.75"/><circle cx="167.8" cy="70.7" r="2.7" fill="none" stroke="#4a3526" stroke-width="0.9" stroke-dasharray="9.5 7.8" transform="rotate(5 167.8 70.7)" opacity="0.75"/><circle cx="278.3" cy="77.2" r="2.7" fill="none" stroke="#5a4030" stroke-width="0.9" stroke-dasharray="9.3 7.6" transform="rotate(230 278.3 77.2)" opacity="0.75"/><circle cx="291.2" cy="83.0" r="2.6" fill="none" stroke="#3a2a1f" stroke-width="0.9" stroke-dasharray="9.0 7.4" transform="rotate(348 291.2 83.0)" opacity="0.75"/><circle cx="295.1" cy="68.4" r="3.0" fill="none" stroke="#6a4c38" stroke-width="0.9" stroke-dasharray="10.2 8.4" transform="rotate(89 295.1 68.4)" opacity="0.75"/><circle cx="228.3" cy="53.7" r="2.3" fill="none" stroke="#5a4030" stroke-width="0.9" stroke-dasharray="7.9 6.4" transform="rotate(328 228.3 53.7)" opacity="0.75"/><circle cx="149.4" cy="69.8" r="3.1" fill="none" stroke="#4a3526" stroke-width="0.9" stroke-dasharray="10.8 8.8" transform="rotate(51 149.4 69.8)" opacity="0.75"/><circle cx="166.9" cy="69.4" r="2.8" fill="none" stroke="#6a4c38" stroke-width="0.9" stroke-dasharray="9.7 8.0" transform="rotate(293 166.9 69.4)" opacity="0.75"/><circle cx="162.3" cy="46.1" r="2.4" fill="none" stroke="#5a4030" stroke-width="0.9" stroke-dasharray="8.3 6.8" transform="rotate(358 162.3 46.1)" opacity="0.75"/><circle cx="264.0" cy="59.3" r="2.9" fill="none" stroke="#6a4c38" stroke-width="0.9" stroke-dasharray="9.9 8.1" transform="rotate(304 264.0 59.3)" opacity="0.75"/><circle cx="267.9" cy="58.3" r="3.3" fill="none" stroke="#6a4c38" stroke-width="0.9" stroke-dasharray="11.3 9.3" transform="rotate(63 267.9 58.3)" opacity="0.75"/><circle cx="249.1" cy="31.6" r="3.6" fill="none" stroke="#3a2a1f" stroke-width="0.9" stroke-dasharray="12.4 10.1" transform="rotate(256 249.1 31.6)" opacity="0.75"/><circle cx="179.2" cy="65.2" r="2.7" fill="none" stroke="#3a2a1f" stroke-width="0.9" stroke-dasharray="9.2 7.6" transform="rotate(106 179.2 65.2)" opacity="0.75"/><circle cx="145.8" cy="61.6" r="2.1" fill="none" stroke="#4a3526" stroke-width="0.9" stroke-dasharray="7.4 6.0" transform="rotate(303 145.8 61.6)" opacity="0.75"/><circle cx="167.5" cy="34.4" r="3.6" fill="none" stroke="#4a3526" stroke-width="0.9" stroke-dasharray="12.5 10.3" transform="rotate(317 167.5 34.4)" opacity="0.75"/><circle cx="190.8" cy="40.7" r="3.6" fill="none" stroke="#6a4c38" stroke-width="0.9" stroke-dasharray="12.5 10.2" transform="rotate(170 190.8 40.7)" opacity="0.75"/><circle cx="228.2" cy="22.5" r="1.9" fill="none" stroke="#4a3526" stroke-width="0.9" stroke-dasharray="6.4 5.2" transform="rotate(205 228.2 22.5)" opacity="0.75"/><circle cx="186.9" cy="38.5" r="3.0" fill="none" stroke="#5a4030" stroke-width="0.9" stroke-dasharray="10.5 8.6" transform="rotate(203 186.9 38.5)" opacity="0.75"/><circle cx="150.7" cy="70.5" r="2.1" fill="none" stroke="#4a3526" stroke-width="0.9" stroke-dasharray="7.3 6.0" transform="rotate(252 150.7 70.5)" opacity="0.75"/><circle cx="249.1" cy="25.3" r="1.9" fill="none" stroke="#5a4030" stroke-width="0.9" stroke-dasharray="6.7 5.5" transform="rotate(24 249.1 25.3)" opacity="0.75"/><circle cx="239.2" cy="50.3" r="3.4" fill="none" stroke="#5a4030" stroke-width="0.9" stroke-dasharray="11.9 9.7" transform="rotate(317 239.2 50.3)" opacity="0.75"/><circle cx="269.8" cy="77.5" r="2.6" fill="none" stroke="#4a3526" stroke-width="0.9" stroke-dasharray="8.9 7.3" transform="rotate(74 269.8 77.5)" opacity="0.75"/><circle cx="286.8" cy="85.3" r="3.1" fill="none" stroke="#3a2a1f" stroke-width="0.9" stroke-dasharray="10.6 8.7" transform="rotate(172 286.8 85.3)" opacity="0.75"/><circle cx="154.5" cy="83.8" r="3.1" fill="none" stroke="#3a2a1f" stroke-width="0.9" stroke-dasharray="10.7 8.7" transform="rotate(115 154.5 83.8)" opacity="0.75"/><circle cx="208.4" cy="23.6" r="2.3" fill="none" stroke="#3a2a1f" stroke-width="0.9" stroke-dasharray="8.0 6.5" transform="rotate(17 208.4 23.6)" opacity="0.75"/><circle cx="270.6" cy="93.0" r="3.3" fill="none" stroke="#6a4c38" stroke-width="0.9" stroke-dasharray="11.5 9.4" transform="rotate(306 270.6 93.0)" opacity="0.75"/><circle cx="244.4" cy="24.4" r="2.6" fill="none" stroke="#6a4c38" stroke-width="0.9" stroke-dasharray="9.1 7.4" transform="rotate(187 244.4 24.4)" opacity="0.75"/><circle cx="148.2" cy="58.6" r="1.9" fill="none" stroke="#4a3526" stroke-width="0.9" stroke-dasharray="6.6 5.4" transform="rotate(257 148.2 58.6)" opacity="0.75"/><circle cx="283.1" cy="66.8" r="2.4" fill="none" stroke="#6a4c38" stroke-width="0.9" stroke-dasharray="8.2 6.7" transform="rotate(0 283.1 66.8)" opacity="0.75"/><circle cx="167.4" cy="81.5" r="3.8" fill="none" stroke="#5a4030" stroke-width="0.9" stroke-dasharray="13.0 10.6" transform="rotate(125 167.4 81.5)" opacity="0.75"/><circle cx="147.7" cy="76.2" r="3.5" fill="none" stroke="#6a4c38" stroke-width="0.9" stroke-dasharray="11.9 9.8" transform="rotate(213 147.7 76.2)" opacity="0.75"/><circle cx="307.1" cy="62.2" r="3.0" fill="none" stroke="#4a3526" stroke-width="0.9" stroke-dasharray="10.2 8.4" transform="rotate(102 307.1 62.2)" opacity="0.75"/><circle cx="169.7" cy="76.6" r="2.8" fill="none" stroke="#5a4030" stroke-width="0.9" stroke-dasharray="9.7 7.9" transform="rotate(338 169.7 76.6)" opacity="0.75"/><circle cx="271.9" cy="60.2" r="3.8" fill="none" stroke="#5a4030" stroke-width="0.9" stroke-dasharray="13.1 10.7" transform="rotate(226 271.9 60.2)" opacity="0.75"/><circle cx="195.8" cy="53.3" r="2.6" fill="none" stroke="#5a4030" stroke-width="0.9" stroke-dasharray="8.9 7.3" transform="rotate(152 195.8 53.3)" opacity="0.75"/><circle cx="249.5" cy="51.0" r="2.4" fill="none" stroke="#6a4c38" stroke-width="0.9" stroke-dasharray="8.3 6.8" transform="rotate(324 249.5 51.0)" opacity="0.75"/><circle cx="222.7" cy="51.6" r="3.6" fill="none" stroke="#4a3526" stroke-width="0.9" stroke-dasharray="12.3 10.1" transform="rotate(340 222.7 51.6)" opacity="0.75"/><circle cx="153.5" cy="68.3" r="3.2" fill="none" stroke="#5a4030" stroke-width="0.9" stroke-dasharray="11.0 9.0" transform="rotate(125 153.5 68.3)" opacity="0.75"/><circle cx="190.4" cy="34.1" r="3.5" fill="none" stroke="#3a2a1f" stroke-width="0.9" stroke-dasharray="12.0 9.9" transform="rotate(61 190.4 34.1)" opacity="0.75"/><circle cx="211.2" cy="82.3" r="3.0" fill="none" stroke="#4a3526" stroke-width="0.9" stroke-dasharray="10.2 8.4" transform="rotate(120 211.2 82.3)" opacity="0.75"/></g>
<!-- brows -->
<path d="M159,151 C172,145 190,145 205,152" stroke="#6b4632" stroke-width="3" fill="none"/>
<path d="M238,152 C252,146 270,146 282,153" stroke="#6b4632" stroke-width="3" fill="none"/>
<!-- eyes -->
<path d="M170,170.5 C178,165.5 195,165.5 204,170.5 C196,174 180,174 170,170.5 Z" fill="#c9a48a"/>
<ellipse cx="187" cy="170" rx="4.2" ry="3.4" fill="#4e3222"/><circle cx="187" cy="169.5" r="1.6" fill="#140c08"/>
<path d="M169,171 C177,165 196,165 205,171" stroke="#3a2418" stroke-width="2.2" fill="none"/>
<path d="M172,161 C180,158 194,158 202,162" stroke="#8a5a42" stroke-width="1.2" fill="none" opacity="0.7"/>
<path d="M238,170.5 C246,165.5 263,165.5 272,170.5 C264,174 248,174 238,170.5 Z" fill="#c9a48a"/>
<ellipse cx="255" cy="170" rx="4.2" ry="3.4" fill="#4e3222"/><circle cx="255" cy="169.5" r="1.6" fill="#140c08"/>
<path d="M237,171 C245,165 264,165 273,171" stroke="#3a2418" stroke-width="2.2" fill="none"/>
<path d="M240,162 C248,158 262,158 270,161" stroke="#8a5a42" stroke-width="1.2" fill="none" opacity="0.7"/>
<!-- under-eye shading -->
<ellipse cx="187" cy="184" rx="14" ry="5" fill="#a87258" opacity="0.35" filter="url(#blur2)"/>
<ellipse cx="255" cy="184" rx="14" ry="5" fill="#a87258" opacity="0.35" filter="url(#blur2)"/>
<!-- nose -->
<path d="M214,180 C212,195 206,203 202,210 C200,218 208,222 214,219 C218,222 230,222 234,219 C240,222 248,218 246,210 C242,203 236,195 234,180" fill="#b98166" opacity="0.45" filter="url(#soft)"/>
<ellipse cx="224" cy="206" rx="11" ry="9" fill="#dcae90" opacity="0.55" filter="url(#blur2)"/>
<path d="M206,214 C209,220 215,220 219,218 M229,218 C233,220 239,220 242,214" stroke="#5e3626" stroke-width="2.6" fill="none"/>
<!-- mouth -->
<path d="M181,228 C205,233 245,233 268,227 C256,252 240,260 224,260 C205,260 190,250 181,228 Z" fill="#c08472"/>
<path d="M188,234 C210,238 240,238 259,234 C252,243 240,247 224,247 C208,247 195,243 188,234 Z" fill="#efe3cc"/>
<path d="M181,228 C205,234 245,234 268,227" stroke="#6a4030" stroke-width="2.2" fill="none"/>
<path d="M180,226 C200,222 250,222 270,225" stroke="#5a3a2a" stroke-width="2" fill="none" opacity="0.35" filter="url(#soft)"/>
<!-- goatee -->
<path d="M190,276 C204,283 244,283 258,276 C256,293 244,305 224,306 C206,305 194,293 190,276 Z" fill="#2e2018" opacity="0.42" filter="url(#blur2)"/>
<path d="M200,284 C212,289 236,289 248,284 C246,296 238,303 224,304 C210,303 202,296 200,284 Z" fill="#2a1c14" opacity="0.35" filter="url(#soft)"/>
<path d="M184,226 C200,222 250,222 266,226" stroke="#3a281e" stroke-width="2.4" fill="none" opacity="0.3" filter="url(#soft)"/>
</svg><div class="t" style="top:72.15px;font-size:47.83px;font-weight:400;color:#36393e;letter-spacing:0.02em;left:522.32px;transform:scaleX(0.7518);transform-origin:left top;-webkit-text-stroke:0.9px #36393e;">Patrick Mahomes</div><div class="t" style="top:136.20px;font-size:24.35px;font-weight:700;color:#36393e;left:522.08px;transform:scaleX(0.9405);transform-origin:left top;">QB #15</div><svg style="left:2037.2px;top:137.5px" width="45.7" height="28.5" viewBox="0 0 33 21" preserveAspectRatio="none">
<path d="M6,0.8 C14,0.6 24,4 32.6,10.5 C24,17 14,20.4 5.8,20.4 L5.8,16.3 L1,16.5 C-0.2,13 0,8 1.4,4.9 L6.1,4.9 Z" fill="#fff" stroke="#111" stroke-width="1"/>
<path d="M8.6,5 L8,13.2 M7,5 L10.2,5 M6.4,13.2 L9.6,13.2 M8.4,10.2 L20.5,5.3 M11.5,8.8 L16.5,12.8" stroke="#d7333f" stroke-width="2.5" fill="none"/>
<path d="M22.2,9.8 A3.8,3.8 0 1,0 22.2,15.2" stroke="#d7333f" stroke-width="2.3" fill="none"/>
</svg><div class="t" style="top:135.81px;font-size:24.93px;font-weight:700;color:#183b5e;left:2094.73px;transform:scaleX(0.9005);transform-origin:left top;">Kansas City Chiefs</div><div class="t" style="top:221.56px;font-size:18.41px;font-weight:700;color:#5b5f66;letter-spacing:0.06em;left:521.27px;transform:scaleX(0.8771);transform-origin:left top;">DOB</div><div class="t" style="top:221.56px;font-size:18.41px;font-weight:700;color:#5b5f66;letter-spacing:0.06em;left:784.13px;transform:scaleX(0.9060);transform-origin:left top;">HEIGHT</div><div class="t" style="top:221.56px;font-size:18.41px;font-weight:700;color:#5b5f66;letter-spacing:0.06em;left:936.80px;transform:scaleX(0.8840);transform-origin:left top;">WEIGHT</div><div class="t" style="top:221.56px;font-size:18.41px;font-weight:700;color:#5b5f66;letter-spacing:0.06em;left:1091.53px;transform:scaleX(0.8577);transform-origin:left top;">SPEED</div><div class="t" style="top:221.56px;font-size:18.41px;font-weight:700;color:#5b5f66;letter-spacing:0.06em;left:1233.38px;transform:scaleX(0.8404);transform-origin:left top;">COLLEGE</div><div class="t" style="top:221.56px;font-size:18.41px;font-weight:700;color:#5b5f66;letter-spacing:0.06em;left:1570.07px;transform:scaleX(0.8770);transform-origin:left top;">DRAFT YEAR</div><div class="t" style="top:221.56px;font-size:18.41px;font-weight:700;color:#5b5f66;letter-spacing:0.06em;left:1766.24px;transform:scaleX(0.9039);transform-origin:left top;">DRAFT TEAM</div><div class="t" style="top:221.56px;font-size:18.41px;font-weight:700;color:#5b5f66;letter-spacing:0.06em;left:2048.85px;transform:scaleX(0.8888);transform-origin:left top;">ROUND</div><div class="t" style="top:221.56px;font-size:18.41px;font-weight:700;color:#5b5f66;letter-spacing:0.06em;left:2196.21px;transform:scaleX(0.8853);transform-origin:left top;">SELECTION</div><div class="t" style="top:250.83px;font-size:24.78px;font-weight:400;color:#1f2023;left:521.81px;transform:scaleX(0.9542);transform-origin:left top;">1995-09-17</div><div class="t" style="top:250.83px;font-size:24.78px;font-weight:400;color:#1f2023;left:784.60px;transform:scaleX(0.9648);transform-origin:left top;">6'2"</div><div class="t" style="top:250.83px;font-size:24.78px;font-weight:400;color:#1f2023;left:936.06px;transform:scaleX(0.9986);transform-origin:left top;">225</div><div class="t" style="top:250.83px;font-size:24.78px;font-weight:400;color:#1f2023;left:1091.53px;transform:scaleX(0.9435);transform-origin:left top;">4.8</div><div class="t" style="top:250.83px;font-size:24.78px;font-weight:400;color:#1f2023;left:1233.53px;transform:scaleX(0.9454);transform-origin:left top;">Texas Tech Red Raiders</div><div class="t" style="top:250.83px;font-size:24.78px;font-weight:400;color:#1f2023;left:1569.97px;transform:scaleX(0.9935);transform-origin:left top;">2017</div><div class="t" style="top:250.83px;font-size:24.78px;font-weight:400;color:#1f2023;left:1765.50px;transform:scaleX(0.9582);transform-origin:left top;">Kansas City Chiefs</div><div class="t" style="top:250.83px;font-size:24.78px;font-weight:400;color:#1f2023;left:2049.16px;transform:scaleX(0.9290);transform-origin:left top;">1</div><div class="t" style="top:250.83px;font-size:24.78px;font-weight:400;color:#1f2023;left:2195.40px;transform:scaleX(1.0108);transform-origin:left top;">10</div><div class="t" style="top:252.68px;font-size:22.61px;font-weight:400;color:#8a9098;left:648.59px;transform:scaleX(0.8917);transform-origin:left top;">(29.2)</div><div style="position:absolute;left:15.00px;top:418.00px;width:1306.00px;height:1000.00px;background:#ffffff;box-shadow:0 2px 8px rgba(0,0,0,0.09);"></div><div style="position:absolute;left:1345.00px;top:418.00px;width:1306.00px;height:692.00px;background:#ffffff;box-shadow:0 2px 8px rgba(0,0,0,0.09);"></div><div style="position:absolute;left:15.00px;top:490.00px;width:1306.00px;height:2.00px;background:#e6eaee;"></div><div style="position:absolute;left:1345.00px;top:490.00px;width:1306.00px;height:2.00px;background:#e6eaee;"></div><div class="t" style="top:438.45px;font-size:32.17px;font-weight:700;color:#242629;letter-spacing:0.07em;left:39.01px;transform:scaleX(0.6100);transform-origin:left top;">2024 WEEKLY OFFENSE GRADES</div><div class="t" style="top:438.45px;font-size:32.17px;font-weight:700;color:#242629;letter-spacing:0.07em;left:1368.95px;transform:scaleX(0.5862);transform-origin:left top;">CAREER OFFENSE GRADES</div><div style="position:absolute;left:158.25px;top:561.00px;width:1.50px;height:800.00px;background:#e5e7ec;"></div><div style="position:absolute;left:263.65px;top:561.00px;width:1.50px;height:800.00px;background:#e5e7ec;"></div><div style="position:absolute;left:369.05px;top:561.00px;width:1.50px;height:800.00px;background:#e5e7ec;"></div><div style="position:absolute;left:474.45px;top:561.00px;width:1.50px;height:800.00px;background:#e5e7ec;"></div><div style="position:absolute;left:579.85px;top:561.00px;width:1.50px;height:800.00px;background:#e5e7ec;"></div><div style="position:absolute;left:685.25px;top:561.00px;width:1.50px;height:800.00px;background:#e5e7ec;"></div><div style="position:absolute;left:790.65px;top:561.00px;width:1.50px;height:800.00px;background:#e5e7ec;"></div><div style="position:absolute;left:896.05px;top:561.00px;width:1.50px;height:800.00px;background:#e5e7ec;"></div><div style="position:absolute;left:1001.45px;top:561.00px;width:1.50px;height:800.00px;background:#e5e7ec;"></div><div style="position:absolute;left:1106.85px;top:561.00px;width:1.50px;height:800.00px;background:#e5e7ec;"></div><div style="position:absolute;left:1212.25px;top:561.00px;width:1.50px;height:800.00px;background:#e5e7ec;"></div><div class="t" style="top:529.86px;font-size:18.99px;font-weight:700;color:#5b5f66;left:154.04px;transform:scaleX(0.9500);transform-origin:left top;">0</div><div class="t" style="top:529.86px;font-size:18.99px;font-weight:700;color:#5b5f66;left:359.88px;transform:scaleX(0.9500);transform-origin:left top;">20</div><div class="t" style="top:529.86px;font-size:18.99px;font-weight:700;color:#5b5f66;left:570.77px;transform:scaleX(0.9500);transform-origin:left top;">40</div><div class="t" style="top:529.86px;font-size:18.99px;font-weight:700;color:#5b5f66;left:781.39px;transform:scaleX(0.9500);transform-origin:left top;">60</div><div class="t" style="top:529.86px;font-size:18.99px;font-weight:700;color:#5b5f66;left:992.28px;transform:scaleX(0.9500);transform-origin:left top;">80</div><div class="t" style="top:529.86px;font-size:18.99px;font-weight:700;color:#5b5f66;left:1197.76px;transform:scaleX(0.9500);transform-origin:left top;">100</div><div style="position:absolute;left:159.00px;top:573.00px;width:926.47px;height:51.50px;background:#bcd7d7;border-radius:4.5px;"></div><div style="position:absolute;left:174.00px;top:591.70px;width:15.00px;height:15.00px;background:#3b8a88;border-radius:4px;"></div><div class="t" style="top:586.05px;font-size:30.29px;font-weight:700;color:#000;letter-spacing:0.05em;left:200.87px;transform:scaleX(0.6977);transform-origin:left top;-webkit-text-stroke:0.3px #000;">87.9</div><svg style="left:99.1px;top:588.5px" width="45.6" height="22.2" viewBox="0 0 46 22" preserveAspectRatio="none">
<path d="M0.6,10.8 C6,5 12,1 19,0.3 C25,0 31,2.5 34.5,5.5 C39,7.5 43.5,10.5 45.8,15.2 C41,14.5 35,15.2 30.5,15.8 C28.5,16.2 27,16 26,15.5 C25,17.5 24,19.5 22.8,21.8 C21.5,19.5 20.5,18 19,16.8 C17,16.5 15,16 13,15.2 C10.5,15.8 7.5,16.5 4.5,16.8 C6.5,14.5 8.5,12.8 10,11.6 C7,11.2 3.5,10.8 0.6,10.8 Z" fill="#9e7c0c"/>
<path d="M3,10.3 C8,5.5 13,2 19.2,1.3 C25,1 30,3.3 33.5,6.2 C37.5,8 41.5,10.5 43.5,14.2 C39,13.6 34,14 30.3,14.6 C28.5,15 27.3,14.8 26.2,14.2 C25,16 24,18 22.8,19.8 C21.8,18 20.5,16.8 19.2,15.8 C17,15.5 15,15 13.2,14.2 C11,14.6 8.8,15.2 6.8,15.6 C8.5,13.5 10.2,12 11.5,11 C8.8,10.6 6,10.3 3,10.3 Z" fill="#241773"/>
<path d="M29.5,9.2 C34,9.5 39.5,11.3 43.2,14 C39,13.3 34,13.6 30.2,14.2 C29,12.8 28.8,10.8 29.5,9.2 Z" fill="#fff"/>
<path d="M29,9 C33,8.8 37,9.8 40.5,11.5" stroke="#000" stroke-width="0.8" fill="none"/>
<path d="M14.8,4.2 C18,3.2 22,3.3 22.2,5.2 C22.4,7 20.5,8.5 17.5,9 C15.5,9.3 14,9 13.2,8.6 Z" fill="#c3a55a"/>
<path d="M16.5,5.2 L16,8 M17,5.3 C19,5 20.5,5.2 20.3,6 C20,6.8 18.5,7.2 16.5,7.3" stroke="#241773" stroke-width="0.7" fill="none"/>
<circle cx="30.5" cy="8" r="0.8" fill="#d0242b"/>
</svg><div class="t" style="top:592.66px;font-size:14.64px;font-weight:700;color:#5a5e66;left:65.39px;transform:scaleX(0.8854);transform-origin:left top;">BLT</div><div class="t" style="top:591.79px;font-size:18.84px;font-weight:400;color:#4b4f57;left:1233.17px;transform:scaleX(0.9500);transform-origin:left top;">1</div><div style="position:absolute;left:159.00px;top:631.52px;width:618.70px;height:51.50px;background:#fbeec0;border-radius:4.5px;"></div><div style="position:absolute;left:174.00px;top:650.22px;width:15.00px;height:15.00px;background:#f2cc45;border-radius:4px;"></div><div class="t" style="top:644.57px;font-size:30.29px;font-weight:700;color:#000;letter-spacing:0.05em;left:200.87px;transform:scaleX(0.6977);transform-origin:left top;-webkit-text-stroke:0.3px #000;">58.7</div><svg style="left:104.8px;top:646.3px" width="33.8" height="24.2" viewBox="0 0 34 24" preserveAspectRatio="none">
<path d="M4,0.8 L26,0.8 C32,0.8 33.5,5 32,9 C34,12 34,22 27,23.2 L5,23.2 L2,18.5 L4,18.5 L4,8.5 L0.8,8.5 Z" fill="#fff" stroke="#222" stroke-width="0.8"/>
<path d="M5,1.6 L26,1.6 C31,1.6 32.5,5 31,9 C33,12 33,21.5 27,22.4 L5.5,22.4 L3.5,19.2 L5,19.2 L5,7.6 L2.5,7.6 Z" fill="#e9612b"/>
<path d="M5,1.6 L9,1.6 C9,8 9.5,14 13,20 C8,16 6,10 5,5 Z M12,1.6 L18,1.6 C16,7 16.5,14 17.5,22.4 L15,22.4 C12,16 11.5,8 12,1.6 Z M23,1.6 L30,2.5 C26,5 22,12 20.5,21 C19.5,14 20,7 23,1.6 Z" fill="#111"/>
<rect x="14.5" y="8" width="3" height="2.4" rx="1" fill="#fff"/><rect x="14.5" y="13" width="3" height="2.4" rx="1" fill="#fff"/>
</svg><div class="t" style="top:651.18px;font-size:14.64px;font-weight:700;color:#5a5e66;left:68.11px;transform:scaleX(0.8854);transform-origin:left top;">CIN</div><div class="t" style="top:650.31px;font-size:18.84px;font-weight:400;color:#4b4f57;left:1233.71px;transform:scaleX(0.9500);transform-origin:left top;">2</div><div style="position:absolute;left:159.00px;top:690.04px;width:643.99px;height:51.50px;background:#f8efc1;border-radius:4.5px;"></div><div style="position:absolute;left:174.00px;top:708.74px;width:15.00px;height:15.00px;background:#e9d048;border-radius:4px;"></div><div class="t" style="top:703.09px;font-size:30.29px;font-weight:700;color:#000;letter-spacing:0.05em;left:200.65px;transform:scaleX(0.6977);transform-origin:left top;-webkit-text-stroke:0.3px #000;">61.1</div><svg style="left:104.5px;top:700.0px" width="35.4" height="33.6" viewBox="0 0 35.4 33.6" preserveAspectRatio="none">
<path d="M0,8.5 L6,0.5 C14,1 26,3 35.4,8 L33.8,12.5 C31,11.8 28,11.8 26,12.2 L29.5,15 C27,16.5 24,16.5 21.5,15 L19.5,16.5 C17.5,21.5 16,27 14.5,33.6 C9,30 5.5,25 5.5,19 C5.5,15 6.5,11 8.5,8.5 Z" fill="#fff" stroke="#a5acaf" stroke-width="1"/>
<path d="M3,7.6 L7,2 C15,2.5 25,4.5 33.5,8.8 L32.6,11 C29.5,10.5 26.5,10.5 23.5,11.3 L26.8,14.2 C25,14.8 23.5,14.8 21.5,13.8 L18.5,15.3 C16.5,20 15,25 14,30.5 C10,27.5 7.5,23.5 7.5,18.5 C7.5,14.5 8.5,11 10.5,8.3 Z" fill="#111"/>
<path d="M9,5 C16,4.8 24,6.2 31,9.2 M10.5,11 C11,16 11.5,21 12.5,26 M13.5,9.5 C14.5,13 16,16 18,18.5 M16.5,8.5 C18,10.5 20,12 22,13" stroke="#a71930" stroke-width="1.1" fill="none"/>
</svg><div class="t" style="top:709.70px;font-size:14.64px;font-weight:700;color:#5a5e66;left:52.95px;transform:scaleX(0.8854);transform-origin:left top;">@ATL</div><div class="t" style="top:708.83px;font-size:18.84px;font-weight:400;color:#4b4f57;left:1233.88px;transform:scaleX(0.9500);transform-origin:left top;">3</div><div style="position:absolute;left:159.00px;top:748.56px;width:842.15px;height:51.50px;background:#c0dfc4;border-radius:4.5px;"></div><div style="position:absolute;left:174.00px;top:767.26px;width:15.00px;height:15.00px;background:#46a050;border-radius:4px;"></div><div class="t" style="top:761.61px;font-size:30.29px;font-weight:700;color:#000;letter-spacing:0.05em;left:200.65px;transform:scaleX(0.6977);transform-origin:left top;-webkit-text-stroke:0.3px #000;">79.9</div><svg style="left:100.7px;top:766.4px" width="42.3" height="16.5" viewBox="0 0 42.3 16.5" preserveAspectRatio="none">
<path d="M0,16.5 C8,6 17,1.5 25.5,0.5 L24.5,3 L30,1.2 L29.3,4.2 C35,6 39.5,10 42.3,16.3 C38,12.5 33,10 28,9.2 L28.5,11.8 L23,8.3 L20.8,10.6 L21.3,8 C14,8.5 7,11.5 0,16.5 Z" fill="#0080c6"/>
<path d="M2.5,14.6 C9.5,7 17.5,3 24,2.2 L23,4.6 L28.4,2.8 L27.9,5.3 C33.5,7 37.5,10 40,13.6 C36,10.8 32,9 27.2,8.2 L27.4,10 L23.2,7.3 L21.8,8.8 L22,7 C14.5,7.5 8.5,10 2.5,14.6 Z" fill="#ffc20e"/>
</svg><div class="t" style="top:768.22px;font-size:14.64px;font-weight:700;color:#5a5e66;left:50.62px;transform:scaleX(0.8854);transform-origin:left top;">@LAC</div><div class="t" style="top:767.35px;font-size:18.84px;font-weight:400;color:#4b4f57;left:1234.24px;transform:scaleX(0.9500);transform-origin:left top;">4</div><div style="position:absolute;left:159.00px;top:807.08px;width:760.99px;height:51.50px;background:#cfe6bd;border-radius:4.5px;"></div><div style="position:absolute;left:174.00px;top:825.78px;width:15.00px;height:15.00px;background:#71b53c;border-radius:4px;"></div><div class="t" style="top:820.13px;font-size:30.29px;font-weight:700;color:#000;letter-spacing:0.05em;left:200.65px;transform:scaleX(0.6977);transform-origin:left top;-webkit-text-stroke:0.3px #000;">72.2</div><svg style="left:107.0px;top:817.0px" width="29.0" height="33.5" viewBox="0 0 30 34" preserveAspectRatio="none">
<path d="M15,0.5 C18,5 19,9 18,13 C21,10 25,8 28,10 C30,13 28,17 25,17 C23,17 22,15 23.5,14 C21,14 19,16 18.5,18 L22,18 L22,21 L18,21 C18,24 19,27 21,28 C19,29 17,30 15,33.5 C13,30 11,29 9,28 C11,27 12,24 12,21 L8,21 L8,18 L11.5,18 C11,16 9,14 6.5,14 C8,15 7,17 5,17 C2,17 0,13 2,10 C5,8 9,10 12,13 C11,9 12,5 15,0.5 Z" fill="#9f8958" stroke="#1a1a1a" stroke-width="1.6"/>
</svg><div class="t" style="top:826.74px;font-size:14.64px;font-weight:700;color:#5a5e66;left:70.58px;transform:scaleX(0.8854);transform-origin:left top;">NO</div><div class="t" style="top:825.87px;font-size:18.84px;font-weight:400;color:#4b4f57;left:1233.88px;transform:scaleX(0.9500);transform-origin:left top;">5</div><div class="t" style="top:884.39px;font-size:18.84px;font-weight:400;color:#4b4f57;left:1233.71px;transform:scaleX(0.9500);transform-origin:left top;">6</div><div style="position:absolute;left:159.00px;top:924.12px;width:734.64px;height:51.50px;background:#d8eabc;border-radius:4.5px;"></div><div style="position:absolute;left:174.00px;top:942.82px;width:15.00px;height:15.00px;background:#8dc23a;border-radius:4px;"></div><div class="t" style="top:937.17px;font-size:30.29px;font-weight:700;color:#000;letter-spacing:0.05em;left:200.65px;transform:scaleX(0.6977);transform-origin:left top;-webkit-text-stroke:0.3px #000;">69.7</div><svg style="left:101.8px;top:939.8px" width="39.9" height="22.4" viewBox="0 0 39.9 22.4" preserveAspectRatio="none">
<ellipse cx="19.95" cy="11.2" rx="19.7" ry="11" fill="#111"/>
<ellipse cx="19.95" cy="11.2" rx="17.9" ry="9.4" fill="#b3995d"/>
<ellipse cx="19.95" cy="11.2" rx="17" ry="8.6" fill="#c52d3a"/>
<path d="M25.5,5.2 C22,3.8 15,3.6 13.5,6.2 C12,9 17,9.6 21,10.2 C24,10.6 25,12 23.5,13.2" stroke="#fff" stroke-width="2.4" fill="none"/>
<path d="M12.5,12.6 L30,12.6 M21,12 L20.5,18.5 M16.5,18.6 L24,18.6 M20.5,15.3 L27,15.3" stroke="#fff" stroke-width="2" fill="none"/>
</svg><div class="t" style="top:943.78px;font-size:14.64px;font-weight:700;color:#5a5e66;left:60.73px;transform:scaleX(0.8854);transform-origin:left top;">@SF</div><div class="t" style="top:942.91px;font-size:18.84px;font-weight:400;color:#4b4f57;left:1233.71px;transform:scaleX(0.9500);transform-origin:left top;">7</div><div style="position:absolute;left:159.00px;top:982.64px;width:891.68px;height:51.50px;background:#bdd8d0;border-radius:4.5px;"></div><div style="position:absolute;left:174.00px;top:1001.34px;width:15.00px;height:15.00px;background:#3d8c74;border-radius:4px;"></div><div class="t" style="top:995.69px;font-size:30.29px;font-weight:700;color:#000;letter-spacing:0.05em;left:200.87px;transform:scaleX(0.6977);transform-origin:left top;-webkit-text-stroke:0.3px #000;">84.6</div><svg style="left:106.0px;top:993.2px" width="31.4" height="32.6" viewBox="0 0 31.4 32.6" preserveAspectRatio="none">
<path d="M0.4,2.5 L12,2.2 L15.7,0 L19.4,2.2 L31,2.5 C31.4,15 28.5,25 15.7,32.4 C2.9,25 0,15 0.4,2.5 Z" fill="#b9bec1"/>
<path d="M1.9,3.7 L12.4,3.5 L15.7,1.6 L19,3.5 L29.5,3.7 C29.7,15 26.8,23.8 15.7,30.6 C4.6,23.8 1.7,15 1.9,3.7 Z" fill="#000"/>
<g fill="#fff"><rect x="5.5" y="5.6" width="2" height="2.6"/><rect x="8.6" y="5.6" width="2" height="2.6"/><rect x="11.6" y="5.6" width="1.4" height="2.6"/><rect x="14" y="5.6" width="2.2" height="2.6"/><rect x="17.2" y="5.6" width="2" height="2.6"/><rect x="20.3" y="5.6" width="2" height="2.6"/><rect x="23.4" y="5.6" width="2" height="2.6"/></g>
<path d="M6.5,12.5 L25,25.5 M25,12.5 L6.5,25.5" stroke="#c9cdd0" stroke-width="1.4"/>
<circle cx="6.8" cy="12.2" r="1.8" fill="none" stroke="#c9cdd0" stroke-width="1"/><circle cx="24.6" cy="12.2" r="1.8" fill="none" stroke="#c9cdd0" stroke-width="1"/>
<path d="M10.2,16 C10.2,11 21.2,11 21.2,16 L21.2,19 L10.2,19 Z" fill="#9ea3a6"/>
<path d="M15.2,10.8 L16.2,10.8 L16.2,19 L15.2,19 Z" fill="#000"/>
<path d="M11,19 L20.5,19 C20.5,23.5 18.5,25.5 15.7,25.5 C13,25.5 11,23.5 11,19 Z" fill="#dfe1e2"/>
<path d="M11,18.5 L17,18.5 L16,21 L12,21 Z" fill="#000"/>
</svg><div class="t" style="top:1002.30px;font-size:14.64px;font-weight:700;color:#5a5e66;left:61.37px;transform:scaleX(0.8854);transform-origin:left top;">@LV</div><div class="t" style="top:1001.43px;font-size:18.84px;font-weight:400;color:#4b4f57;left:1233.88px;transform:scaleX(0.9500);transform-origin:left top;">8</div><div style="position:absolute;left:159.00px;top:1041.16px;width:929.63px;height:51.50px;background:#bcd7da;border-radius:4.5px;"></div><div style="position:absolute;left:174.00px;top:1059.86px;width:15.00px;height:15.00px;background:#3a8a92;border-radius:4px;"></div><div class="t" style="top:1054.21px;font-size:30.29px;font-weight:700;color:#000;letter-spacing:0.05em;left:200.87px;transform:scaleX(0.6977);transform-origin:left top;-webkit-text-stroke:0.3px #000;">88.2</div><svg style="left:104.8px;top:1054.0px" width="33.8" height="28.9" viewBox="0 0 36 30" preserveAspectRatio="none">
<path d="M7,3.6 C11,2.5 15,2 18,2.2 C24,2.6 29,5 34,3.8 L35,0.2 C35.8,5 35,9 34,11.7 C32.5,15 31,17 29.5,18.8 C26,19.5 22,19.8 17.8,19.3 C14,18.5 11,17 8,16.5 C5,17 2.5,18.5 0.2,20.5 C2,17 3.5,13 4.7,9.2 C3.5,8 4.5,6 7,3.6 Z" fill="#c9332a" stroke="#2e2a26" stroke-width="0.9"/>
<path d="M12,6 C14,10 16.5,13 19,15 M30,11 C27,13.5 23.5,15 20,15.8" stroke="#b0b5b8" stroke-width="1.3" fill="none"/>
<circle cx="21" cy="7.8" r="3.4" fill="#fff"/>
<path d="M19,11 L23,11 L22.5,13 L19.5,13 Z" fill="#e8e8e8"/>
<ellipse cx="18.6" cy="15.4" rx="2.6" ry="1.6" fill="#ff7a1a"/>
<path d="M29.5,18.8 L21,29.6" stroke="#222" stroke-width="2.6"/>
<path d="M29.5,18.8 L21,29.6" stroke="#a5acaf" stroke-width="1" stroke-dasharray="1.2 1"/>
</svg><div class="t" style="top:1060.82px;font-size:14.64px;font-weight:700;color:#5a5e66;left:72.78px;transform:scaleX(0.8854);transform-origin:left top;">TB</div><div class="t" style="top:1059.95px;font-size:18.84px;font-weight:400;color:#4b4f57;left:1233.71px;transform:scaleX(0.9500);transform-origin:left top;">9</div><div style="position:absolute;left:159.00px;top:1099.68px;width:626.08px;height:51.50px;background:#faeec0;border-radius:4.5px;"></div><div style="position:absolute;left:174.00px;top:1118.38px;width:15.00px;height:15.00px;background:#f1cd46;border-radius:4px;"></div><div class="t" style="top:1112.73px;font-size:30.29px;font-weight:700;color:#000;letter-spacing:0.05em;left:200.87px;transform:scaleX(0.6977);transform-origin:left top;-webkit-text-stroke:0.3px #000;">59.4</div><svg style="left:100.5px;top:1113.6px" width="42.4" height="24.5" viewBox="0 0 42.4 24.5" preserveAspectRatio="none">
<path d="M1,8 C5,4.5 12,3.5 19,4.5 C26,5 33,7 37,10 C40,12 42,15 42.4,18 C41,20 38,20.5 35.5,19.5 C32,18.5 29,18 26.5,19 C23.5,20.5 21.5,22.5 20.5,24.5 C19.5,22 19,19.5 20,17 C17,15 13,13.5 9,13 C5,12.5 2.5,10.5 1,8 Z" fill="#fff" stroke="#0a2343" stroke-width="1.1"/>
<path d="M1,8 C4,3.5 9,1.5 15,1.8 C13.5,1 12.5,0.5 11.5,0.3 C17,0 23,1.5 26.5,4.5 C21,3.8 17,4.5 14.5,6 C10,6.2 5,7 1,8 Z" fill="#fb4f14"/>
<path d="M16,2.5 C19,1 24,1 27,2.5" stroke="#fb4f14" stroke-width="1.5" fill="none"/>
<path d="M9,10 C14,8 20,8 25,10 M22,13 C26,11 31,11 35,13 M24,17 C22,18.5 21,20 20.5,22" stroke="#0a2343" stroke-width="1" fill="none"/>
</svg><div class="t" style="top:1119.34px;font-size:14.64px;font-weight:700;color:#5a5e66;left:63.06px;transform:scaleX(0.8854);transform-origin:left top;">DEN</div><div class="t" style="top:1118.47px;font-size:18.84px;font-weight:400;color:#4b4f57;left:1233.17px;transform:scaleX(0.9500);transform-origin:left top;">10</div><div style="position:absolute;left:159.00px;top:1158.20px;width:779.96px;height:51.50px;background:#c9e3be;border-radius:4.5px;"></div><div style="position:absolute;left:174.00px;top:1176.90px;width:15.00px;height:15.00px;background:#60ae3f;border-radius:4px;"></div><div class="t" style="top:1171.25px;font-size:30.29px;font-weight:700;color:#000;letter-spacing:0.05em;left:200.65px;transform:scaleX(0.6977);transform-origin:left top;-webkit-text-stroke:0.3px #000;">74</div><svg style="left:103.0px;top:1171.3px" width="38.7" height="26.4" viewBox="0 0 38.7 26.4" preserveAspectRatio="none">
<path d="M9,9 C15,3 25,0.3 32.5,0.5 C36.5,1 38.7,4.5 38.2,8.5 C37.8,11.5 35.5,13.8 32.5,14 C31.5,16.8 29,18.5 26,19 L22,18.8 C18.5,20.5 14.5,23 10.5,26.4 C12.5,23 14.5,20.8 17.2,18.5 C13.5,19.5 9.5,22 6.5,25 C8.5,21 11.5,17.2 15,14.5 C11.5,13.5 9,11.5 9,9 Z" fill="#00338d"/>
<path d="M0.5,13.2 L35.5,6.8 L36.2,9.6 L1.2,16.4 Z" fill="#fff"/>
<path d="M0.5,13.8 L34.8,7.8 L35.2,10 L1,16 Z" fill="#c60c30"/>
</svg><div class="t" style="top:1177.86px;font-size:14.64px;font-weight:700;color:#5a5e66;left:50.75px;transform:scaleX(0.8854);transform-origin:left top;">@BUF</div><div class="t" style="top:1176.99px;font-size:18.84px;font-weight:400;color:#4b4f57;left:1233.17px;transform:scaleX(0.9500);transform-origin:left top;">11</div><div style="position:absolute;left:159.00px;top:1216.72px;width:799.99px;height:51.50px;background:#c4e1bf;border-radius:4.5px;"></div><div style="position:absolute;left:174.00px;top:1235.42px;width:15.00px;height:15.00px;background:#50a843;border-radius:4px;"></div><div class="t" style="top:1229.77px;font-size:30.29px;font-weight:700;color:#000;letter-spacing:0.05em;left:200.65px;transform:scaleX(0.6977);transform-origin:left top;-webkit-text-stroke:0.3px #000;">75.9</div><svg style="left:99.9px;top:1231.5px" width="43.0" height="24.5" viewBox="0 0 44 27" preserveAspectRatio="none">
<path d="M0.5,21 C6,15 12,8 20,4 C27,1 34,0.5 40,2 L43.5,6 C42,8 41,10 40,13 C38,17 35,20 32,22 C30,24 28,26 27,26.5 C25,23 22,21 18,20.5 C12,20 6,20.5 0.5,21 Z" fill="#0085ca"/>
<path d="M3,20.5 C8,15 14,9 21,5.5 C27,2.5 33,2 39,3.2 L41.5,6.5 C40,9 39,11 38,14 C36,17.5 33.5,20 30.5,22 C29,23.5 28,25 27,25.5 C25,22.5 22,20 18,19.7 C12,19.3 7,19.8 3,20.5 Z" fill="#101820"/>
<path d="M32,8 L36,7 M33,13 C35,14 37,14 38,12" stroke="#bfc0bf" stroke-width="1.2" fill="none"/>
</svg><div class="t" style="top:1236.38px;font-size:14.64px;font-weight:700;color:#5a5e66;left:49.06px;transform:scaleX(0.8854);transform-origin:left top;">@CAR</div><div class="t" style="top:1235.51px;font-size:18.84px;font-weight:400;color:#4b4f57;left:1233.17px;transform:scaleX(0.9500);transform-origin:left top;">12</div><div style="position:absolute;left:159.00px;top:1275.24px;width:765.20px;height:51.50px;background:#cde5bd;border-radius:4.5px;"></div><div style="position:absolute;left:174.00px;top:1293.94px;width:15.00px;height:15.00px;background:#6cb33c;border-radius:4px;"></div><div class="t" style="top:1288.29px;font-size:30.29px;font-weight:700;color:#000;letter-spacing:0.05em;left:200.65px;transform:scaleX(0.6977);transform-origin:left top;-webkit-text-stroke:0.3px #000;">72.6</div><svg style="left:106.0px;top:1286.0px" width="31.4" height="32.6" viewBox="0 0 31.4 32.6" preserveAspectRatio="none">
<path d="M0.4,2.5 L12,2.2 L15.7,0 L19.4,2.2 L31,2.5 C31.4,15 28.5,25 15.7,32.4 C2.9,25 0,15 0.4,2.5 Z" fill="#b9bec1"/>
<path d="M1.9,3.7 L12.4,3.5 L15.7,1.6 L19,3.5 L29.5,3.7 C29.7,15 26.8,23.8 15.7,30.6 C4.6,23.8 1.7,15 1.9,3.7 Z" fill="#000"/>
<g fill="#fff"><rect x="5.5" y="5.6" width="2" height="2.6"/><rect x="8.6" y="5.6" width="2" height="2.6"/><rect x="11.6" y="5.6" width="1.4" height="2.6"/><rect x="14" y="5.6" width="2.2" height="2.6"/><rect x="17.2" y="5.6" width="2" height="2.6"/><rect x="20.3" y="5.6" width="2" height="2.6"/><rect x="23.4" y="5.6" width="2" height="2.6"/></g>
<path d="M6.5,12.5 L25,25.5 M25,12.5 L6.5,25.5" stroke="#c9cdd0" stroke-width="1.4"/>
<circle cx="6.8" cy="12.2" r="1.8" fill="none" stroke="#c9cdd0" stroke-width="1"/><circle cx="24.6" cy="12.2" r="1.8" fill="none" stroke="#c9cdd0" stroke-width="1"/>
<path d="M10.2,16 C10.2,11 21.2,11 21.2,16 L21.2,19 L10.2,19 Z" fill="#9ea3a6"/>
<path d="M15.2,10.8 L16.2,10.8 L16.2,19 L15.2,19 Z" fill="#000"/>
<path d="M11,19 L20.5,19 C20.5,23.5 18.5,25.5 15.7,25.5 C13,25.5 11,23.5 11,19 Z" fill="#dfe1e2"/>
<path d="M11,18.5 L17,18.5 L16,21 L12,21 Z" fill="#000"/>
</svg><div class="t" style="top:1294.90px;font-size:14.64px;font-weight:700;color:#5a5e66;left:73.95px;transform:scaleX(0.8854);transform-origin:left top;">LV</div><div class="t" style="top:1294.03px;font-size:18.84px;font-weight:400;color:#4b4f57;left:1233.17px;transform:scaleX(0.9500);transform-origin:left top;">13</div><div class="t" style="top:1352.55px;font-size:18.84px;font-weight:400;color:#4b4f57;left:1233.17px;transform:scaleX(0.9500);transform-origin:left top;">14</div><div style="position:absolute;left:80.30px;top:892.10px;width:9.60px;height:1.90px;background:#60646b;"></div><div style="position:absolute;left:1428.15px;top:561.00px;width:1.50px;height:465.00px;background:#e5e7ec;"></div><div style="position:absolute;left:1539.65px;top:561.00px;width:1.50px;height:465.00px;background:#e5e7ec;"></div><div style="position:absolute;left:1651.15px;top:561.00px;width:1.50px;height:465.00px;background:#e5e7ec;"></div><div style="position:absolute;left:1762.65px;top:561.00px;width:1.50px;height:465.00px;background:#e5e7ec;"></div><div style="position:absolute;left:1874.15px;top:561.00px;width:1.50px;height:465.00px;background:#e5e7ec;"></div><div style="position:absolute;left:1985.65px;top:561.00px;width:1.50px;height:465.00px;background:#e5e7ec;"></div><div style="position:absolute;left:2097.15px;top:561.00px;width:1.50px;height:465.00px;background:#e5e7ec;"></div><div style="position:absolute;left:2208.65px;top:561.00px;width:1.50px;height:465.00px;background:#e5e7ec;"></div><div style="position:absolute;left:2320.15px;top:561.00px;width:1.50px;height:465.00px;background:#e5e7ec;"></div><div style="position:absolute;left:2431.65px;top:561.00px;width:1.50px;height:465.00px;background:#e5e7ec;"></div><div style="position:absolute;left:2543.15px;top:561.00px;width:1.50px;height:465.00px;background:#e5e7ec;"></div><div class="t" style="top:529.86px;font-size:18.99px;font-weight:700;color:#5b5f66;left:1423.94px;transform:scaleX(0.9500);transform-origin:left top;">0</div><div class="t" style="top:1042.68px;font-size:18.26px;font-weight:700;color:#5b5f66;left:1424.13px;transform:scaleX(0.9500);transform-origin:left top;">0</div><div class="t" style="top:529.86px;font-size:18.99px;font-weight:700;color:#5b5f66;left:1641.98px;transform:scaleX(0.9500);transform-origin:left top;">20</div><div class="t" style="top:1042.68px;font-size:18.26px;font-weight:700;color:#5b5f66;left:1642.36px;transform:scaleX(0.9500);transform-origin:left top;">20</div><div class="t" style="top:529.86px;font-size:18.99px;font-weight:700;color:#5b5f66;left:1865.07px;transform:scaleX(0.9500);transform-origin:left top;">40</div><div class="t" style="top:1042.68px;font-size:18.26px;font-weight:700;color:#5b5f66;left:1865.45px;transform:scaleX(0.9500);transform-origin:left top;">40</div><div class="t" style="top:529.86px;font-size:18.99px;font-weight:700;color:#5b5f66;left:2087.89px;transform:scaleX(0.9500);transform-origin:left top;">60</div><div class="t" style="top:1042.68px;font-size:18.26px;font-weight:700;color:#5b5f66;left:2088.27px;transform:scaleX(0.9500);transform-origin:left top;">60</div><div class="t" style="top:529.86px;font-size:18.99px;font-weight:700;color:#5b5f66;left:2310.98px;transform:scaleX(0.9500);transform-origin:left top;">80</div><div class="t" style="top:1042.68px;font-size:18.26px;font-weight:700;color:#5b5f66;left:2311.36px;transform:scaleX(0.9500);transform-origin:left top;">80</div><div class="t" style="top:529.86px;font-size:18.99px;font-weight:700;color:#5b5f66;left:2528.66px;transform:scaleX(0.9500);transform-origin:left top;">100</div><div class="t" style="top:1042.68px;font-size:18.26px;font-weight:700;color:#5b5f66;left:2529.24px;transform:scaleX(0.9500);transform-origin:left top;">100</div><div style="position:absolute;left:1428.90px;top:568.60px;width:809.49px;height:50.30px;background:#cde5bd;border-radius:4.5px;"></div><div style="position:absolute;left:1444.00px;top:586.20px;width:15.00px;height:15.00px;background:#6cb33c;border-radius:4px;"></div><div class="t" style="top:581.40px;font-size:30.00px;font-weight:700;color:#000;letter-spacing:0.05em;left:1470.15px;transform:scaleX(0.7044);transform-origin:left top;-webkit-text-stroke:0.3px #000;">72.6</div><div class="t" style="top:586.03px;font-size:18.55px;font-weight:400;color:#4b4f57;left:2562.87px;">2017</div><svg style="left:1382.1px;top:583.1px" width="33.0" height="21.1" viewBox="0 0 33 21" preserveAspectRatio="none">
<path d="M6,0.8 C14,0.6 24,4 32.6,10.5 C24,17 14,20.4 5.8,20.4 L5.8,16.3 L1,16.5 C-0.2,13 0,8 1.4,4.9 L6.1,4.9 Z" fill="#fff" stroke="#111" stroke-width="1"/>
<path d="M8.6,5 L8,13.2 M7,5 L10.2,5 M6.4,13.2 L9.6,13.2 M8.4,10.2 L20.5,5.3 M11.5,8.8 L16.5,12.8" stroke="#d7333f" stroke-width="2.5" fill="none"/>
<path d="M22.2,9.8 A3.8,3.8 0 1,0 22.2,15.2" stroke="#d7333f" stroke-width="2.3" fill="none"/>
</svg><div style="position:absolute;left:1428.90px;top:625.60px;width:1034.72px;height:50.30px;background:#b8cee0;border-radius:4.5px;"></div><div style="position:absolute;left:1444.00px;top:643.20px;width:15.00px;height:15.00px;background:#2f6fa3;border-radius:4px;"></div><div class="t" style="top:638.40px;font-size:30.00px;font-weight:700;color:#000;letter-spacing:0.05em;left:1470.15px;transform:scaleX(0.7044);transform-origin:left top;-webkit-text-stroke:0.3px #000;">92.8</div><div class="t" style="top:643.03px;font-size:18.55px;font-weight:400;color:#4b4f57;left:2562.87px;">2018</div><svg style="left:1382.1px;top:640.1px" width="33.0" height="21.1" viewBox="0 0 33 21" preserveAspectRatio="none">
<path d="M6,0.8 C14,0.6 24,4 32.6,10.5 C24,17 14,20.4 5.8,20.4 L5.8,16.3 L1,16.5 C-0.2,13 0,8 1.4,4.9 L6.1,4.9 Z" fill="#fff" stroke="#111" stroke-width="1"/>
<path d="M8.6,5 L8,13.2 M7,5 L10.2,5 M6.4,13.2 L9.6,13.2 M8.4,10.2 L20.5,5.3 M11.5,8.8 L16.5,12.8" stroke="#d7333f" stroke-width="2.5" fill="none"/>
<path d="M22.2,9.8 A3.8,3.8 0 1,0 22.2,15.2" stroke="#d7333f" stroke-width="2.3" fill="none"/>
</svg><div style="position:absolute;left:1428.90px;top:682.60px;width:1003.50px;height:50.30px;background:#bcd6e1;border-radius:4.5px;"></div><div style="position:absolute;left:1444.00px;top:700.20px;width:15.00px;height:15.00px;background:#3a86a6;border-radius:4px;"></div><div class="t" style="top:695.40px;font-size:30.00px;font-weight:700;color:#000;letter-spacing:0.05em;left:1470.15px;transform:scaleX(0.7044);transform-origin:left top;-webkit-text-stroke:0.3px #000;">90</div><div class="t" style="top:700.03px;font-size:18.55px;font-weight:400;color:#4b4f57;left:2562.87px;">2019</div><svg style="left:1382.1px;top:697.1px" width="33.0" height="21.1" viewBox="0 0 33 21" preserveAspectRatio="none">
<path d="M6,0.8 C14,0.6 24,4 32.6,10.5 C24,17 14,20.4 5.8,20.4 L5.8,16.3 L1,16.5 C-0.2,13 0,8 1.4,4.9 L6.1,4.9 Z" fill="#fff" stroke="#111" stroke-width="1"/>
<path d="M8.6,5 L8,13.2 M7,5 L10.2,5 M6.4,13.2 L9.6,13.2 M8.4,10.2 L20.5,5.3 M11.5,8.8 L16.5,12.8" stroke="#d7333f" stroke-width="2.5" fill="none"/>
<path d="M22.2,9.8 A3.8,3.8 0 1,0 22.2,15.2" stroke="#d7333f" stroke-width="2.3" fill="none"/>
</svg><div style="position:absolute;left:1428.90px;top:739.60px;width:1023.57px;height:50.30px;background:#bad1e0;border-radius:4.5px;"></div><div style="position:absolute;left:1444.00px;top:757.20px;width:15.00px;height:15.00px;background:#3377a5;border-radius:4px;"></div><div class="t" style="top:752.40px;font-size:30.00px;font-weight:700;color:#000;letter-spacing:0.05em;left:1470.15px;transform:scaleX(0.7044);transform-origin:left top;-webkit-text-stroke:0.3px #000;">91.8</div><div class="t" style="top:757.03px;font-size:18.55px;font-weight:400;color:#4b4f57;left:2562.87px;">2020</div><svg style="left:1382.1px;top:754.1px" width="33.0" height="21.1" viewBox="0 0 33 21" preserveAspectRatio="none">
<path d="M6,0.8 C14,0.6 24,4 32.6,10.5 C24,17 14,20.4 5.8,20.4 L5.8,16.3 L1,16.5 C-0.2,13 0,8 1.4,4.9 L6.1,4.9 Z" fill="#fff" stroke="#111" stroke-width="1"/>
<path d="M8.6,5 L8,13.2 M7,5 L10.2,5 M6.4,13.2 L9.6,13.2 M8.4,10.2 L20.5,5.3 M11.5,8.8 L16.5,12.8" stroke="#d7333f" stroke-width="2.5" fill="none"/>
<path d="M22.2,9.8 A3.8,3.8 0 1,0 22.2,15.2" stroke="#d7333f" stroke-width="2.3" fill="none"/>
</svg><div style="position:absolute;left:1428.90px;top:796.60px;width:893.12px;height:50.30px;background:#beddc3;border-radius:4.5px;"></div><div style="position:absolute;left:1444.00px;top:814.20px;width:15.00px;height:15.00px;background:#3f9a4e;border-radius:4px;"></div><div class="t" style="top:809.40px;font-size:30.00px;font-weight:700;color:#000;letter-spacing:0.05em;left:1470.37px;transform:scaleX(0.7044);transform-origin:left top;-webkit-text-stroke:0.3px #000;">80.1</div><div class="t" style="top:814.03px;font-size:18.55px;font-weight:400;color:#4b4f57;left:2562.87px;">2021</div><svg style="left:1382.1px;top:811.1px" width="33.0" height="21.1" viewBox="0 0 33 21" preserveAspectRatio="none">
<path d="M6,0.8 C14,0.6 24,4 32.6,10.5 C24,17 14,20.4 5.8,20.4 L5.8,16.3 L1,16.5 C-0.2,13 0,8 1.4,4.9 L6.1,4.9 Z" fill="#fff" stroke="#111" stroke-width="1"/>
<path d="M8.6,5 L8,13.2 M7,5 L10.2,5 M6.4,13.2 L9.6,13.2 M8.4,10.2 L20.5,5.3 M11.5,8.8 L16.5,12.8" stroke="#d7333f" stroke-width="2.5" fill="none"/>
<path d="M22.2,9.8 A3.8,3.8 0 1,0 22.2,15.2" stroke="#d7333f" stroke-width="2.3" fill="none"/>
</svg><div style="position:absolute;left:1428.90px;top:853.60px;width:1025.80px;height:50.30px;background:#b9d0e0;border-radius:4.5px;"></div><div style="position:absolute;left:1444.00px;top:871.20px;width:15.00px;height:15.00px;background:#3275a5;border-radius:4px;"></div><div class="t" style="top:866.40px;font-size:30.00px;font-weight:700;color:#000;letter-spacing:0.05em;left:1470.15px;transform:scaleX(0.7044);transform-origin:left top;-webkit-text-stroke:0.3px #000;">92</div><div class="t" style="top:871.03px;font-size:18.55px;font-weight:400;color:#4b4f57;left:2562.87px;">2022</div><svg style="left:1382.1px;top:868.1px" width="33.0" height="21.1" viewBox="0 0 33 21" preserveAspectRatio="none">
<path d="M6,0.8 C14,0.6 24,4 32.6,10.5 C24,17 14,20.4 5.8,20.4 L5.8,16.3 L1,16.5 C-0.2,13 0,8 1.4,4.9 L6.1,4.9 Z" fill="#fff" stroke="#111" stroke-width="1"/>
<path d="M8.6,5 L8,13.2 M7,5 L10.2,5 M6.4,13.2 L9.6,13.2 M8.4,10.2 L20.5,5.3 M11.5,8.8 L16.5,12.8" stroke="#d7333f" stroke-width="2.5" fill="none"/>
<path d="M22.2,9.8 A3.8,3.8 0 1,0 22.2,15.2" stroke="#d7333f" stroke-width="2.3" fill="none"/>
</svg><div style="position:absolute;left:1428.90px;top:910.60px;width:1009.08px;height:50.30px;background:#bbd4e1;border-radius:4.5px;"></div><div style="position:absolute;left:1444.00px;top:928.20px;width:15.00px;height:15.00px;background:#3882a6;border-radius:4px;"></div><div class="t" style="top:923.40px;font-size:30.00px;font-weight:700;color:#000;letter-spacing:0.05em;left:1470.15px;transform:scaleX(0.7044);transform-origin:left top;-webkit-text-stroke:0.3px #000;">90.5</div><div class="t" style="top:928.03px;font-size:18.55px;font-weight:400;color:#4b4f57;left:2562.87px;">2023</div><svg style="left:1382.1px;top:925.1px" width="33.0" height="21.1" viewBox="0 0 33 21" preserveAspectRatio="none">
<path d="M6,0.8 C14,0.6 24,4 32.6,10.5 C24,17 14,20.4 5.8,20.4 L5.8,16.3 L1,16.5 C-0.2,13 0,8 1.4,4.9 L6.1,4.9 Z" fill="#fff" stroke="#111" stroke-width="1"/>
<path d="M8.6,5 L8,13.2 M7,5 L10.2,5 M6.4,13.2 L9.6,13.2 M8.4,10.2 L20.5,5.3 M11.5,8.8 L16.5,12.8" stroke="#d7333f" stroke-width="2.5" fill="none"/>
<path d="M22.2,9.8 A3.8,3.8 0 1,0 22.2,15.2" stroke="#d7333f" stroke-width="2.3" fill="none"/>
</svg><div style="position:absolute;left:1428.90px;top:967.60px;width:951.10px;height:50.30px;background:#bdd7d1;border-radius:4.5px;"></div><div style="position:absolute;left:1444.00px;top:985.20px;width:15.00px;height:15.00px;background:#3d8a78;border-radius:4px;"></div><div class="t" style="top:980.40px;font-size:30.00px;font-weight:700;color:#000;letter-spacing:0.05em;left:1470.37px;transform:scaleX(0.7044);transform-origin:left top;-webkit-text-stroke:0.3px #000;">85.3</div><div class="t" style="top:985.03px;font-size:18.55px;font-weight:400;color:#4b4f57;left:2562.87px;">2024</div><svg style="left:1382.1px;top:982.1px" width="33.0" height="21.1" viewBox="0 0 33 21" preserveAspectRatio="none">
<path d="M6,0.8 C14,0.6 24,4 32.6,10.5 C24,17 14,20.4 5.8,20.4 L5.8,16.3 L1,16.5 C-0.2,13 0,8 1.4,4.9 L6.1,4.9 Z" fill="#fff" stroke="#111" stroke-width="1"/>
<path d="M8.6,5 L8,13.2 M7,5 L10.2,5 M6.4,13.2 L9.6,13.2 M8.4,10.2 L20.5,5.3 M11.5,8.8 L16.5,12.8" stroke="#d7333f" stroke-width="2.5" fill="none"/>
<path d="M22.2,9.8 A3.8,3.8 0 1,0 22.2,15.2" stroke="#d7333f" stroke-width="2.3" fill="none"/>
</svg>
</body></html>
